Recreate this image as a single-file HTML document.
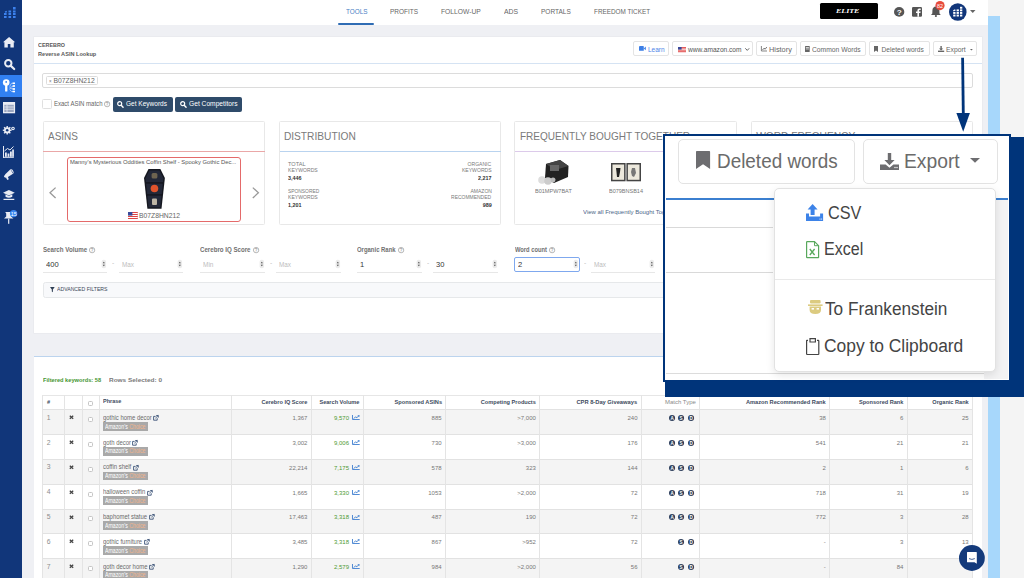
<!DOCTYPE html>
<html><head><meta charset="utf-8"><style>
html,body{margin:0;padding:0;width:1024px;height:578px;overflow:hidden;}
body{font-family:'Liberation Sans', sans-serif;}
#root{position:relative;width:1024px;height:578px;overflow:hidden;}
</style></head><body><div id="root">
<div style="position:absolute;left:0px;top:0px;width:1024.00px;height:578.00px;background:#eff0f4"></div>
<div style="position:absolute;left:22px;top:0px;width:966.00px;height:25.00px;background:#fff"></div>
<div style="position:absolute;left:988px;top:0px;width:36.00px;height:578.00px;background:#f4f4f4"></div>
<div style="position:absolute;left:988.3px;top:16px;width:12.00px;height:562.00px;background:#a7d7fb"></div>
<div style="position:absolute;left:0px;top:0px;width:22.00px;height:578.00px;background:#11367a"></div>
<div style="position:absolute;left:0px;top:74.8px;width:22.00px;height:22.20px;background:#3180f2"></div>
<svg style="position:absolute;left:4px;top:6.5px;width:12.00px;height:10.50px;overflow:visible" viewBox="0 0 12 10.5" preserveAspectRatio="none">
<rect x="0" y="6" width="2.6" height="2" fill="#3d82ee"/><rect x="0" y="9" width="2.6" height="2" fill="#3d82ee"/>
<rect x="4.5" y="3.5" width="2.6" height="2" fill="#3d82ee"/><rect x="4.5" y="6" width="2.6" height="2" fill="#3d82ee"/><rect x="4.5" y="9" width="2.6" height="2" fill="#3d82ee"/>
<rect x="9" y="0" width="2.6" height="2.5" fill="#3d82ee"/><rect x="9" y="3.5" width="2.6" height="2" fill="#3d82ee"/><rect x="9" y="6" width="2.6" height="2" fill="#3d82ee"/><rect x="9" y="9" width="2.6" height="2" fill="#3d82ee"/>
<rect x="1" y="4" width="2" height="1.5" fill="#3d82ee" transform="rotate(-20 2 5)"/>
</svg>
<svg style="position:absolute;left:3px;top:36.8px;width:12.20px;height:10.40px;overflow:visible" viewBox="0 0 12.2 10.4" preserveAspectRatio="none"><path d="M6.1 0 L12.2 5.2 L10.8 5.2 L10.8 10.4 L7.4 10.4 L7.4 7 L4.8 7 L4.8 10.4 L1.4 10.4 L1.4 5.2 L0 5.2 Z" fill="#e9ecf4"/></svg>
<svg style="position:absolute;left:3.5px;top:58.8px;width:11.20px;height:10.40px;overflow:visible" viewBox="0 0 11.2 10.4" preserveAspectRatio="none"><circle cx="4.3" cy="4.3" r="3.2" fill="none" stroke="#e9ecf4" stroke-width="2"/><path d="M6.6 6.6 L10.2 10" stroke="#e9ecf4" stroke-width="2.2" stroke-linecap="round"/></svg>
<svg style="position:absolute;left:0px;top:74.4px;width:22.00px;height:22.60px;overflow:visible" viewBox="0 0 22 22.6" preserveAspectRatio="none"><circle cx="6.2" cy="8.6" r="3.3" fill="#fff"/><circle cx="6.2" cy="7.9" r="0.9" fill="#3382ef"/><rect x="5.1" y="10" width="2.3" height="7.6" rx="0.6" fill="#fff"/><path d="M9.6 12.5 L11.5 9.3 L15 9.3 M9.6 13.5 L15 12 M9.6 14.5 L15 15 M9.6 15.5 L11.5 17.5 L15 17.5" stroke="#cfe0fb" stroke-width="0.7" fill="none"/><rect x="12.6" y="8.5" width="2.4" height="1.6" fill="#fff"/><rect x="12.6" y="11.2" width="2.4" height="1.6" fill="#fff"/><rect x="12.6" y="14.2" width="2.4" height="1.6" fill="#fff"/><rect x="12.6" y="16.7" width="2.4" height="1.6" fill="#fff"/></svg>
<svg style="position:absolute;left:3.1px;top:102px;width:12.10px;height:11.30px;overflow:visible" viewBox="0 0 12.1 11.3" preserveAspectRatio="none"><rect x="0" y="0" width="12.1" height="11.3" fill="#e9ecf4"/><rect x="1.3" y="2.8" width="9.5" height="7.2" fill="#9aa6c0"/><rect x="1.3" y="4.6" width="9.5" height="0.8" fill="#e9ecf4"/><rect x="1.3" y="6.8" width="9.5" height="0.8" fill="#e9ecf4"/><rect x="3.6" y="2.8" width="0.8" height="7.2" fill="#e9ecf4"/></svg>
<svg style="position:absolute;left:3.4px;top:125.5px;width:11.80px;height:8.50px;overflow:visible" viewBox="0 0 11.8 8.8" preserveAspectRatio="none"><circle cx="4.2" cy="4.4" r="3.2" fill="#e9ecf4"/><rect x="3.5" y="0" width="1.4" height="8.8" fill="#e9ecf4" transform="rotate(0 4.2 4.4)"/><rect x="3.5" y="0" width="1.4" height="8.8" fill="#e9ecf4" transform="rotate(45 4.2 4.4)"/><rect x="3.5" y="0" width="1.4" height="8.8" fill="#e9ecf4" transform="rotate(90 4.2 4.4)"/><rect x="3.5" y="0" width="1.4" height="8.8" fill="#e9ecf4" transform="rotate(135 4.2 4.4)"/><circle cx="4.2" cy="4.4" r="1.3" fill="#11367a"/><circle cx="10" cy="2.5" r="1.8" fill="#e9ecf4"/><circle cx="10" cy="2.5" r="0.7" fill="#11367a"/></svg>
<svg style="position:absolute;left:3.4px;top:145.5px;width:10.90px;height:11.80px;overflow:visible" viewBox="0 0 10.9 11.8" preserveAspectRatio="none"><rect x="0" y="0" width="1" height="11.8" fill="#e9ecf4"/><rect x="0" y="10.8" width="10.9" height="1" fill="#e9ecf4"/><rect x="2" y="6.5" width="1.8" height="4.3" fill="#e9ecf4"/><rect x="4.6" y="7.5" width="1.8" height="3.3" fill="#e9ecf4"/><rect x="7" y="5.5" width="1.8" height="5.3" fill="#e9ecf4"/><rect x="9.2" y="3.5" width="1.7" height="7.3" fill="#e9ecf4"/><path d="M1.5 5 L4.5 2.5 L7 4 L10.5 0.5" stroke="#e9ecf4" stroke-width="1" fill="none"/></svg>
<svg style="position:absolute;left:3.8px;top:168.7px;width:9.90px;height:11.10px;overflow:visible" viewBox="0 0 9.9 11.1" preserveAspectRatio="none"><path d="M1 5.5 L6.5 0.3 Q8 -0.2 9 1.5 Q10.2 3.5 9.4 4.6 L3.2 8.6 Z" fill="#e9ecf4"/><path d="M6.8 1.2 Q8.6 2.4 8.8 4.3" stroke="#11367a" stroke-width="0.6" fill="none"/><path d="M1.8 8.2 L3.3 11 L4.8 10.2 L3.8 7.8Z" fill="#e9ecf4"/><circle cx="1.6" cy="7.2" r="1.5" fill="#e9ecf4"/></svg>
<svg style="position:absolute;left:3.4px;top:190.2px;width:11.80px;height:10.50px;overflow:visible" viewBox="0 0 11.8 10.5" preserveAspectRatio="none"><path d="M5.9 0 L11.8 2.8 L5.9 5.6 L0 2.8 Z" fill="#e9ecf4"/><path d="M2.5 4.2 L2.5 6.8 Q5.9 8.5 9.3 6.8 L9.3 4.2 L5.9 6 Z" fill="#e9ecf4"/><rect x="0.5" y="8.8" width="10.8" height="1.2" fill="#e9ecf4"/></svg>
<svg style="position:absolute;left:3.8px;top:210.2px;width:13.30px;height:13.80px;overflow:visible" viewBox="0 0 13.3 13.8" preserveAspectRatio="none"><path d="M1.2 2 L8.2 2 L7.2 3.6 L7.2 6.4 L9.4 8.6 L0 8.6 L2.2 6.4 L2.2 3.6 Z" fill="#e9ecf4"/><rect x="4.1" y="8.6" width="1.2" height="5.2" fill="#e9ecf4"/><circle cx="9.6" cy="3.6" r="3.7" fill="#3a86f0"/><text x="9.7" y="5.6" font-size="5.4" fill="#fff" text-anchor="middle" font-family="Liberation Sans">15</text></svg>
<span style="position:absolute;top:8.11px;font-family:'Liberation Sans', sans-serif;font-size:7.2px;line-height:7.2px;font-weight:400;color:#4d80c4;white-space:nowrap;left:345.60px;transform:scaleX(0.887);transform-origin:left;">TOOLS</span>
<span style="position:absolute;top:8.11px;font-family:'Liberation Sans', sans-serif;font-size:7.2px;line-height:7.2px;font-weight:400;color:#666;white-space:nowrap;left:390.00px;transform:scaleX(0.899);transform-origin:left;">PROFITS</span>
<span style="position:absolute;top:8.11px;font-family:'Liberation Sans', sans-serif;font-size:7.2px;line-height:7.2px;font-weight:400;color:#666;white-space:nowrap;left:441.00px;transform:scaleX(0.934);transform-origin:left;">FOLLOW-UP</span>
<span style="position:absolute;top:8.11px;font-family:'Liberation Sans', sans-serif;font-size:7.2px;line-height:7.2px;font-weight:400;color:#666;white-space:nowrap;left:503.80px;transform:scaleX(0.954);transform-origin:left;">ADS</span>
<span style="position:absolute;top:8.11px;font-family:'Liberation Sans', sans-serif;font-size:7.2px;line-height:7.2px;font-weight:400;color:#666;white-space:nowrap;left:541.00px;transform:scaleX(0.906);transform-origin:left;">PORTALS</span>
<span style="position:absolute;top:8.11px;font-family:'Liberation Sans', sans-serif;font-size:7.2px;line-height:7.2px;font-weight:400;color:#666;white-space:nowrap;left:594.20px;transform:scaleX(0.885);transform-origin:left;">FREEDOM TICKET</span>
<div style="position:absolute;left:338.2px;top:23.4px;width:36.30px;height:2.00px;background:#2f6cb4;border-radius:1px"></div>
<div style="position:absolute;left:819.8px;top:3.3px;width:58.20px;height:16.20px;background:#000;border-radius:1.5px"></div>
<span style="position:absolute;top:8.31px;font-family:'Liberation Serif', serif;font-size:6.6px;line-height:6.6px;font-weight:700;color:#fff;white-space:nowrap;font-style:italic;left:836.40px;transform:scaleX(1.205);transform-origin:left;">ELITE</span>
<svg style="position:absolute;left:894.4px;top:7px;width:10.30px;height:9.80px;overflow:visible" viewBox="0 0 10 10" preserveAspectRatio="none"><circle cx="5" cy="5" r="5" fill="#555"/><text x="5" y="7.8" font-size="8" font-weight="bold" fill="#fff" text-anchor="middle" font-family="Liberation Sans">?</text></svg>
<svg style="position:absolute;left:912px;top:7px;width:10.00px;height:9.80px;overflow:visible" viewBox="0 0 10 10" preserveAspectRatio="none"><rect x="0" y="0" width="10" height="10" rx="1.2" fill="#555"/><path d="M7 10 L7 6.2 L8.4 6.2 L8.6 4.6 L7 4.6 L7 3.7 Q7 3 7.8 3 L8.7 3 L8.7 1.6 Q8 1.5 7.3 1.5 Q5.4 1.5 5.4 3.4 L5.4 4.6 L4 4.6 L4 6.2 L5.4 6.2 L5.4 10 Z" fill="#fff"/></svg>
<svg style="position:absolute;left:930.7px;top:6px;width:9.80px;height:11.00px;overflow:visible" viewBox="0 0 9.8 11" preserveAspectRatio="none"><path d="M4.9 0.5 Q8.3 0.8 8.4 4.5 L8.5 7.5 L9.8 9 L0 9 L1.3 7.5 L1.4 4.5 Q1.5 0.8 4.9 0.5Z" fill="#555"/><circle cx="4.9" cy="10" r="1.1" fill="#555"/></svg>
<svg style="position:absolute;left:935px;top:0.8px;width:10.00px;height:9.20px;overflow:visible" viewBox="0 0 10 9.2" preserveAspectRatio="none"><circle cx="5" cy="4.6" r="4.6" fill="#e74c3c"/><text x="5" y="6.6" font-size="5.4" fill="#fff" text-anchor="middle" font-family="Liberation Sans">82</text></svg>
<svg style="position:absolute;left:949px;top:2.7px;width:17.60px;height:18.00px;overflow:visible" viewBox="0 0 17.6 18" preserveAspectRatio="none"><circle cx="8.8" cy="9" r="8.8" fill="#11367a"/><rect x="4.2" y="11.6" width="2.3" height="1.9" fill="#fff"/><rect x="7.6" y="11.6" width="2.3" height="1.9" fill="#fff"/><rect x="11" y="11.6" width="2.3" height="1.9" fill="#fff"/><rect x="4.2" y="9" width="2.3" height="1.9" fill="#fff"/><rect x="7.6" y="9" width="2.3" height="1.9" fill="#fff"/><rect x="11" y="9" width="2.3" height="1.9" fill="#fff"/><rect x="7.6" y="6.4" width="2.3" height="1.9" fill="#fff"/><rect x="11" y="6.4" width="2.3" height="1.9" fill="#fff"/><rect x="11" y="3.8" width="2.3" height="1.9" fill="#fff"/><rect x="4.2" y="6.6" width="2.3" height="1.6" fill="#fff" transform="rotate(-25 5.3 7.4)"/></svg>
<svg style="position:absolute;left:969.5px;top:10px;width:5.50px;height:3.00px;overflow:visible" viewBox="0 0 5.5 3" preserveAspectRatio="none"><path d="M0 0 L5.5 0 L2.75 3 Z" fill="#666"/></svg>
<div style="position:absolute;left:33.8px;top:37px;width:947.80px;height:295.80px;background:#fff;box-shadow:0 0 0 0.6px #e6e8ec"></div>
<div style="position:absolute;left:33.8px;top:63.2px;width:947.80px;height:1.00px;background:#d5e3f3"></div>
<span style="position:absolute;top:42.56px;font-family:'Liberation Sans', sans-serif;font-size:5.6px;line-height:5.6px;font-weight:700;color:#5a5a5a;white-space:nowrap;left:38.40px;transform:scaleX(0.965);transform-origin:left;">CEREBRO</span>
<span style="position:absolute;top:51.12px;font-family:'Liberation Sans', sans-serif;font-size:6.0px;line-height:6.0px;font-weight:700;color:#5a5a5a;white-space:nowrap;left:38.40px;transform:scaleX(0.932);transform-origin:left;">Reverse ASIN Lookup</span>
<div style="position:absolute;left:633.3px;top:41.3px;width:36.10px;height:15.10px;background:#fff;border:0.8px solid #e4e4e4;border-radius:2px;box-sizing:border-box"></div>
<div style="position:absolute;left:672.3px;top:41.3px;width:80.50px;height:15.10px;background:#fff;border:0.8px solid #e4e4e4;border-radius:2px;box-sizing:border-box"></div>
<div style="position:absolute;left:756px;top:41.3px;width:41.30px;height:15.10px;background:#fff;border:0.8px solid #e4e4e4;border-radius:2px;box-sizing:border-box"></div>
<div style="position:absolute;left:800.4px;top:41.3px;width:65.40px;height:15.10px;background:#fff;border:0.8px solid #e4e4e4;border-radius:2px;box-sizing:border-box"></div>
<div style="position:absolute;left:869px;top:41.3px;width:60.60px;height:15.10px;background:#fff;border:0.8px solid #e4e4e4;border-radius:2px;box-sizing:border-box"></div>
<div style="position:absolute;left:932.6px;top:41.3px;width:44.90px;height:15.10px;background:#fff;border:0.8px solid #e4e4e4;border-radius:2px;box-sizing:border-box"></div>
<svg style="position:absolute;left:638.8px;top:46.2px;width:6.80px;height:4.80px;overflow:visible" viewBox="0 0 6.8 4.8" preserveAspectRatio="none"><rect x="0" y="0" width="4.8" height="4.8" rx="0.5" fill="#3d7fe6"/><path d="M4.8 2.4 L6.8 0.6 L6.8 4.2 Z" fill="#3d7fe6"/></svg>
<span style="position:absolute;top:46.51px;font-family:'Liberation Sans', sans-serif;font-size:6.6px;line-height:6.6px;font-weight:400;color:#4d86e8;white-space:nowrap;left:647.80px;transform:scaleX(0.984);transform-origin:left;">Learn</span>
<svg style="position:absolute;left:677.8px;top:47.3px;width:8.00px;height:5.20px;overflow:visible" viewBox="0 0 8 5.2" preserveAspectRatio="none"><rect width="8" height="5.2" fill="#d33"/><rect y="0.8" width="8" height="0.7" fill="#fff"/><rect y="2.2" width="8" height="0.7" fill="#fff"/><rect y="3.6" width="8" height="0.7" fill="#fff"/><rect width="3.6" height="2.6" fill="#3a4a9a"/></svg>
<span style="position:absolute;top:46.51px;font-family:'Liberation Sans', sans-serif;font-size:6.6px;line-height:6.6px;font-weight:400;color:#555;white-space:nowrap;left:688.00px;">www.amazon.com</span>
<svg style="position:absolute;left:745px;top:48.3px;width:4.50px;height:2.70px;overflow:visible" viewBox="0 0 4.5 2.7" preserveAspectRatio="none"><path d="M0.3 0.3 L2.25 2.4 L4.2 0.3" stroke="#555" stroke-width="0.9" fill="none"/></svg>
<svg style="position:absolute;left:761px;top:46.2px;width:6.00px;height:5.30px;overflow:visible" viewBox="0 0 6 5.3" preserveAspectRatio="none"><path d="M0.4 0 L0.4 5 L6 5" stroke="#666" stroke-width="0.8" fill="none"/><path d="M1.5 4 L3 2.2 L4.2 3.2 L5.8 1" stroke="#666" stroke-width="0.9" fill="none"/></svg>
<span style="position:absolute;top:46.51px;font-family:'Liberation Sans', sans-serif;font-size:6.6px;line-height:6.6px;font-weight:400;color:#666;white-space:nowrap;left:768.80px;transform:scaleX(1.111);transform-origin:left;">History</span>
<svg style="position:absolute;left:805.3px;top:46px;width:4.70px;height:6.00px;overflow:visible" viewBox="0 0 4.7 6" preserveAspectRatio="none"><rect width="4.7" height="6" rx="0.5" fill="#666"/><rect x="0.8" y="1.2" width="3.1" height="0.7" fill="#fff"/><rect x="0.8" y="2.6" width="3.1" height="0.7" fill="#fff"/></svg>
<span style="position:absolute;top:46.51px;font-family:'Liberation Sans', sans-serif;font-size:6.6px;line-height:6.6px;font-weight:400;color:#666;white-space:nowrap;left:812.20px;transform:scaleX(1.021);transform-origin:left;">Common Words</span>
<svg style="position:absolute;left:874.3px;top:46px;width:4.00px;height:6.00px;overflow:visible" viewBox="0 0 4 6" preserveAspectRatio="none"><path d="M0 0 L4 0 L4 6 L2 4.5 L0 6 Z" fill="#666"/></svg>
<span style="position:absolute;top:46.51px;font-family:'Liberation Sans', sans-serif;font-size:6.6px;line-height:6.6px;font-weight:400;color:#666;white-space:nowrap;left:881.60px;">Deleted words</span>
<svg style="position:absolute;left:937.6px;top:46px;width:6.20px;height:6.00px;overflow:visible" viewBox="0 0 6.2 6" preserveAspectRatio="none"><path d="M2.4 0 L3.8 0 L3.8 2.6 L5.2 2.6 L3.1 4.6 L1 2.6 L2.4 2.6 Z" fill="#666"/><rect x="0" y="4.6" width="6.2" height="1.4" fill="#666"/></svg>
<span style="position:absolute;top:46.51px;font-family:'Liberation Sans', sans-serif;font-size:6.6px;line-height:6.6px;font-weight:400;color:#666;white-space:nowrap;left:945.80px;transform:scaleX(1.028);transform-origin:left;">Export</span>
<svg style="position:absolute;left:969.8px;top:48.6px;width:2.80px;height:1.60px;overflow:visible" viewBox="0 0 2.8 1.6" preserveAspectRatio="none"><path d="M0 0 L2.8 0 L1.4 1.6 Z" fill="#666"/></svg>
<div style="position:absolute;left:42.3px;top:72.8px;width:930.40px;height:15.20px;background:#fff;border:0.8px solid #dcdcdc;border-radius:2px;box-sizing:border-box"></div>
<div style="position:absolute;left:45.7px;top:76px;width:52.40px;height:9.30px;background:#fff;border:0.8px solid #dcdcdc;border-radius:1.5px;box-sizing:border-box"></div>
<span style="position:absolute;top:78.97px;font-family:'Liberation Sans', sans-serif;font-size:5.0px;line-height:5.0px;font-weight:400;color:#777;white-space:nowrap;left:48.80px;transform:scaleX(0.890);transform-origin:left;">&#215;</span>
<span style="position:absolute;top:77.84px;font-family:'Liberation Sans', sans-serif;font-size:6.8px;line-height:6.8px;font-weight:400;color:#666;white-space:nowrap;left:53.50px;">B07Z8HN212</span>
<div style="position:absolute;left:42.3px;top:99.3px;width:9.90px;height:10.10px;background:#fff;border:0.8px solid #e0e0e0;border-radius:1.5px;box-sizing:border-box"></div>
<span style="position:absolute;top:101.14px;font-family:'Liberation Sans', sans-serif;font-size:6.8px;line-height:6.8px;font-weight:400;color:#666;white-space:nowrap;left:54.00px;transform:scaleX(0.885);transform-origin:left;">Exact ASIN match</span>
<svg style="position:absolute;left:103.5px;top:101.3px;width:6.20px;height:6.20px;overflow:visible" viewBox="0 0 6.2 6.2" preserveAspectRatio="none"><circle cx="3.1" cy="3.1" r="2.7" fill="none" stroke="#888" stroke-width="0.6"/><text x="3.1" y="5" font-size="4.6" fill="#888" text-anchor="middle" font-family="Liberation Sans">?</text></svg>
<div style="position:absolute;left:112.5px;top:97px;width:60.20px;height:15.00px;background:#2f4b6a;border-radius:2px"></div>
<div style="position:absolute;left:175px;top:97px;width:66.90px;height:15.00px;background:#2f4b6a;border-radius:2px"></div>
<svg style="position:absolute;left:117.4px;top:100.6px;width:6.60px;height:6.80px;overflow:visible" viewBox="0 0 6.6 6.8" preserveAspectRatio="none"><circle cx="2.7" cy="2.7" r="2.0" fill="none" stroke="#fff" stroke-width="1.2"/><path d="M4.2 4.2 L6.1 6.3" stroke="#fff" stroke-width="1.4" stroke-linecap="round"/></svg>
<span style="position:absolute;top:101.44px;font-family:'Liberation Sans', sans-serif;font-size:6.8px;line-height:6.8px;font-weight:400;color:#fff;white-space:nowrap;left:126.00px;transform:scaleX(0.960);transform-origin:left;">Get Keywords</span>
<svg style="position:absolute;left:180.1px;top:100.6px;width:6.60px;height:6.80px;overflow:visible" viewBox="0 0 6.6 6.8" preserveAspectRatio="none"><circle cx="2.7" cy="2.7" r="2.0" fill="none" stroke="#fff" stroke-width="1.2"/><path d="M4.2 4.2 L6.1 6.3" stroke="#fff" stroke-width="1.4" stroke-linecap="round"/></svg>
<span style="position:absolute;top:101.44px;font-family:'Liberation Sans', sans-serif;font-size:6.8px;line-height:6.8px;font-weight:400;color:#fff;white-space:nowrap;left:189.00px;transform:scaleX(0.980);transform-origin:left;">Get Competitors</span>
<div style="position:absolute;left:42.5px;top:121.3px;width:222.90px;height:104.20px;background:#fff;border:0.8px solid #e8e8e8;border-radius:1.5px;box-sizing:border-box"></div>
<div style="position:absolute;left:43.3px;top:151.3px;width:221.30px;height:1.00px;background:#eaa7a7"></div>
<span style="position:absolute;top:131.57px;font-family:'Liberation Sans', sans-serif;font-size:10.2px;line-height:10.2px;font-weight:400;color:#7a7a7a;white-space:nowrap;left:47.70px;transform:scaleX(0.981);transform-origin:left;">ASINS</span>
<div style="position:absolute;left:278.7px;top:121.3px;width:222.80px;height:104.20px;background:#fff;border:0.8px solid #e8e8e8;border-radius:1.5px;box-sizing:border-box"></div>
<div style="position:absolute;left:279.5px;top:151.3px;width:221.20px;height:1.00px;background:#b9d3ef"></div>
<span style="position:absolute;top:131.57px;font-family:'Liberation Sans', sans-serif;font-size:10.2px;line-height:10.2px;font-weight:400;color:#7a7a7a;white-space:nowrap;left:283.90px;">DISTRIBUTION</span>
<div style="position:absolute;left:514.4px;top:121.3px;width:222.60px;height:104.20px;background:#fff;border:0.8px solid #e8e8e8;border-radius:1.5px;box-sizing:border-box"></div>
<div style="position:absolute;left:515.1999999999999px;top:151.3px;width:221.00px;height:1.00px;background:#dccaea"></div>
<span style="position:absolute;top:131.57px;font-family:'Liberation Sans', sans-serif;font-size:10.2px;line-height:10.2px;font-weight:400;color:#7a7a7a;white-space:nowrap;left:519.60px;transform:scaleX(0.984);transform-origin:left;">FREQUENTLY BOUGHT TOGETHER</span>
<div style="position:absolute;left:751px;top:121.3px;width:221.70px;height:104.20px;background:#fff;border:0.8px solid #e8e8e8;border-radius:1.5px;box-sizing:border-box"></div>
<div style="position:absolute;left:751.8px;top:151.3px;width:220.10px;height:1.00px;background:#b9d3ef"></div>
<span style="position:absolute;top:131.57px;font-family:'Liberation Sans', sans-serif;font-size:10.2px;line-height:10.2px;font-weight:400;color:#7a7a7a;white-space:nowrap;left:756.20px;">WORD FREQUENCY</span>
<div style="position:absolute;left:67.1px;top:156.5px;width:173.70px;height:65.80px;border:1px solid #e46a6a;border-radius:3px;box-sizing:border-box"></div>
<span style="position:absolute;top:160.26px;font-family:'Liberation Sans', sans-serif;font-size:5.6px;line-height:5.6px;font-weight:400;color:#555;white-space:nowrap;left:69.70px;transform:scaleX(1.044);transform-origin:left;">Manny's Mysterious Oddities Coffin Shelf - Spooky Gothic Dec...</span>
<svg style="position:absolute;left:48.6px;top:186.5px;width:7.40px;height:11.70px;overflow:visible" viewBox="0 0 7.4 11.7" preserveAspectRatio="none"><path d="M6.6 0.6 L1 5.85 L6.6 11.1" stroke="#999" stroke-width="1.3" fill="none"/></svg>
<svg style="position:absolute;left:251.8px;top:186.5px;width:7.70px;height:11.70px;overflow:visible" viewBox="0 0 7.7 11.7" preserveAspectRatio="none"><path d="M0.8 0.6 L6.4 5.85 L0.8 11.1" stroke="#999" stroke-width="1.3" fill="none"/></svg>
<svg style="position:absolute;left:143.5px;top:169px;width:20.90px;height:39.70px;overflow:visible" viewBox="0 0 20.9 39.7" preserveAspectRatio="none"><path d="M4.5 0 L16.4 0 L20.9 9 L17.5 39.7 L3.4 39.7 L0 9 Z" fill="#15171f"/><path d="M5.4 1.4 L15.5 1.4 L19.4 9.2 L16.3 38.3 L4.6 38.3 L1.5 9.2 Z" fill="#232838"/><rect x="7.6" y="4" width="5.8" height="5.6" rx="1.5" fill="#6e6450"/><circle cx="10.45" cy="19.5" r="3.8" fill="#e0532c"/><rect x="8" y="29.5" width="5" height="6.5" rx="1" fill="#bdb5a5"/><rect x="2" y="13.5" width="17" height="0.9" fill="#0c0c10"/><rect x="3" y="25.5" width="15" height="0.9" fill="#0c0c10"/></svg>
<svg style="position:absolute;left:127.6px;top:211.8px;width:9.80px;height:7.00px;overflow:visible" viewBox="0 0 9.8 7" preserveAspectRatio="none"><rect width="9.8" height="7" fill="#d44"/><rect y="1" width="9.8" height="1" fill="#fff"/><rect y="3" width="9.8" height="1" fill="#fff"/><rect y="5" width="9.8" height="1" fill="#fff"/><rect width="4.4" height="3.6" fill="#3a4a9a"/></svg>
<span style="position:absolute;top:211.71px;font-family:'Liberation Sans', sans-serif;font-size:7.2px;line-height:7.2px;font-weight:400;color:#666;white-space:nowrap;left:138.60px;transform:scaleX(0.941);transform-origin:left;">B07Z8HN212</span>
<span style="position:absolute;top:161.66px;font-family:'Liberation Sans', sans-serif;font-size:5.6px;line-height:5.6px;font-weight:400;color:#7a7a7a;white-space:nowrap;left:288.00px;">TOTAL</span>
<span style="position:absolute;top:167.56px;font-family:'Liberation Sans', sans-serif;font-size:5.6px;line-height:5.6px;font-weight:400;color:#7a7a7a;white-space:nowrap;left:288.00px;transform:scaleX(0.910);transform-origin:left;">KEYWORDS</span>
<span style="position:absolute;top:175.69px;font-family:'Liberation Sans', sans-serif;font-size:5.8px;line-height:5.8px;font-weight:700;color:#333;white-space:nowrap;left:288.00px;transform:scaleX(0.930);transform-origin:left;">3,446</span>
<span style="position:absolute;top:189.16px;font-family:'Liberation Sans', sans-serif;font-size:5.6px;line-height:5.6px;font-weight:400;color:#7a7a7a;white-space:nowrap;left:288.00px;transform:scaleX(0.874);transform-origin:left;">SPONSORED</span>
<span style="position:absolute;top:195.06px;font-family:'Liberation Sans', sans-serif;font-size:5.6px;line-height:5.6px;font-weight:400;color:#7a7a7a;white-space:nowrap;left:288.00px;transform:scaleX(0.910);transform-origin:left;">KEYWORDS</span>
<span style="position:absolute;top:203.19px;font-family:'Liberation Sans', sans-serif;font-size:5.8px;line-height:5.8px;font-weight:700;color:#333;white-space:nowrap;left:288.00px;transform:scaleX(0.930);transform-origin:left;">1,201</span>
<span style="position:absolute;top:161.66px;font-family:'Liberation Sans', sans-serif;font-size:5.6px;line-height:5.6px;font-weight:400;color:#7a7a7a;white-space:nowrap;right:532.50px;transform:scaleX(0.900);transform-origin:right;">ORGANIC</span>
<span style="position:absolute;top:167.56px;font-family:'Liberation Sans', sans-serif;font-size:5.6px;line-height:5.6px;font-weight:400;color:#7a7a7a;white-space:nowrap;right:532.50px;transform:scaleX(0.910);transform-origin:right;">KEYWORDS</span>
<span style="position:absolute;top:175.69px;font-family:'Liberation Sans', sans-serif;font-size:5.8px;line-height:5.8px;font-weight:700;color:#333;white-space:nowrap;right:532.50px;transform:scaleX(0.930);transform-origin:right;">2,217</span>
<span style="position:absolute;top:189.16px;font-family:'Liberation Sans', sans-serif;font-size:5.6px;line-height:5.6px;font-weight:400;color:#7a7a7a;white-space:nowrap;right:532.50px;transform:scaleX(0.898);transform-origin:right;">AMAZON</span>
<span style="position:absolute;top:195.06px;font-family:'Liberation Sans', sans-serif;font-size:5.6px;line-height:5.6px;font-weight:400;color:#7a7a7a;white-space:nowrap;right:532.50px;transform:scaleX(0.888);transform-origin:right;">RECOMMENDED</span>
<span style="position:absolute;top:203.19px;font-family:'Liberation Sans', sans-serif;font-size:5.8px;line-height:5.8px;font-weight:700;color:#333;white-space:nowrap;right:532.50px;transform:scaleX(0.931);transform-origin:right;">989</span>
<svg style="position:absolute;left:537.8px;top:158.4px;width:30.50px;height:26.90px;overflow:visible" viewBox="0 0 30.5 26.9" preserveAspectRatio="none"><path d="M8 6 L22 2 L30.5 8 L30 19 L16 25 L7 20 Z" fill="#222"/><path d="M8 6 L22 2 L30.5 8 L17 12 Z" fill="#444"/><rect x="12" y="7" width="9" height="6" fill="#666"/><circle cx="4" cy="22" r="3.8" fill="#ddd"/><circle cx="10" cy="23" r="3.8" fill="#ccc"/><circle cx="15" cy="22" r="2.5" fill="#bbb"/></svg>
<span style="position:absolute;top:189.39px;font-family:'Liberation Sans', sans-serif;font-size:5.8px;line-height:5.8px;font-weight:400;color:#777;white-space:nowrap;left:535.00px;transform:scaleX(0.954);transform-origin:left;">B01MPW7BAT</span>
<svg style="position:absolute;left:611px;top:163px;width:30.00px;height:18.30px;overflow:visible" viewBox="0 0 30 18.3" preserveAspectRatio="none"><rect x="0" y="0" width="14.6" height="18.3" fill="#444"/><rect x="15.4" y="0" width="14.6" height="18.3" fill="#444"/><rect x="1.5" y="1.5" width="11.6" height="15.3" fill="#ece8dc"/><rect x="16.9" y="1.5" width="11.6" height="15.3" fill="#ece8dc"/><path d="M5 5 L9.5 5 L9 9 L8 14 L6 14 L5.5 9Z" fill="#222"/><path d="M21 5 L24 5 L25 10 L23 14 L21 13 L20 9Z" fill="#777"/></svg>
<span style="position:absolute;top:189.39px;font-family:'Liberation Sans', sans-serif;font-size:5.8px;line-height:5.8px;font-weight:400;color:#777;white-space:nowrap;left:608.80px;transform:scaleX(0.950);transform-origin:left;">B079BNSB14</span>
<span style="position:absolute;top:210.26px;font-family:'Liberation Sans', sans-serif;font-size:5.6px;line-height:5.6px;font-weight:400;color:#4c6687;white-space:nowrap;left:583.00px;transform:scaleX(1.071);transform-origin:left;">View all Frequently Bought Together</span>
<span style="position:absolute;top:246.37px;font-family:'Liberation Sans', sans-serif;font-size:7.0px;line-height:7.0px;font-weight:700;color:#707070;white-space:nowrap;left:42.50px;transform:scaleX(0.881);transform-origin:left;">Search Volume</span>
<svg style="position:absolute;left:88.8px;top:246.6px;width:6.20px;height:6.20px;overflow:visible" viewBox="0 0 6.2 6.2" preserveAspectRatio="none"><circle cx="3.1" cy="3.1" r="2.7" fill="none" stroke="#888" stroke-width="0.6"/><text x="3.1" y="5" font-size="4.6" fill="#888" text-anchor="middle" font-family="Liberation Sans">?</text></svg>
<div style="position:absolute;left:42.5px;top:271.8px;width:64.70px;height:0.80px;background:#e7e7e7"></div>
<span style="position:absolute;top:260.61px;font-family:'Liberation Sans', sans-serif;font-size:7.2px;line-height:7.2px;font-weight:400;color:#333;white-space:nowrap;left:45.50px;transform:scaleX(1.050);transform-origin:left;">400</span>
<svg style="position:absolute;left:101.8px;top:260.4px;width:3.70px;height:8.00px;overflow:visible" viewBox="0 0 3.7 8" preserveAspectRatio="none"><rect x="-0.4" y="-0.3" width="4.5" height="8.6" rx="2" fill="#ebebeb"/><path d="M0.8 3.2 L1.85 1.7 L2.9 3.2Z M0.8 4.8 L1.85 6.3 L2.9 4.8Z" fill="#444"/></svg>
<div style="position:absolute;left:118.5px;top:271.8px;width:64.70px;height:0.80px;background:#e7e7e7"></div>
<span style="position:absolute;top:260.61px;font-family:'Liberation Sans', sans-serif;font-size:7.2px;line-height:7.2px;font-weight:400;color:#bdbdbd;white-space:nowrap;left:121.50px;transform:scaleX(0.883);transform-origin:left;">Max</span>
<svg style="position:absolute;left:177.8px;top:260.4px;width:3.70px;height:8.00px;overflow:visible" viewBox="0 0 3.7 8" preserveAspectRatio="none"><rect x="-0.4" y="-0.3" width="4.5" height="8.6" rx="2" fill="#ebebeb"/><path d="M0.8 3.2 L1.85 1.7 L2.9 3.2Z M0.8 4.8 L1.85 6.3 L2.9 4.8Z" fill="#444"/></svg>
<span style="position:absolute;top:260.12px;font-family:'Liberation Sans', sans-serif;font-size:6px;line-height:6px;font-weight:400;color:#aaa;white-space:nowrap;left:112.20px;transform:scaleX(1.100);transform-origin:left;">-</span>
<span style="position:absolute;top:246.37px;font-family:'Liberation Sans', sans-serif;font-size:7.0px;line-height:7.0px;font-weight:700;color:#707070;white-space:nowrap;left:200.20px;transform:scaleX(0.877);transform-origin:left;">Cerebro IQ Score</span>
<svg style="position:absolute;left:252.89999999999998px;top:246.6px;width:6.20px;height:6.20px;overflow:visible" viewBox="0 0 6.2 6.2" preserveAspectRatio="none"><circle cx="3.1" cy="3.1" r="2.7" fill="none" stroke="#888" stroke-width="0.6"/><text x="3.1" y="5" font-size="4.6" fill="#888" text-anchor="middle" font-family="Liberation Sans">?</text></svg>
<div style="position:absolute;left:200.2px;top:271.8px;width:64.70px;height:0.80px;background:#e7e7e7"></div>
<span style="position:absolute;top:260.61px;font-family:'Liberation Sans', sans-serif;font-size:7.2px;line-height:7.2px;font-weight:400;color:#bdbdbd;white-space:nowrap;left:203.20px;transform:scaleX(0.906);transform-origin:left;">Min</span>
<svg style="position:absolute;left:259.5px;top:260.4px;width:3.70px;height:8.00px;overflow:visible" viewBox="0 0 3.7 8" preserveAspectRatio="none"><rect x="-0.4" y="-0.3" width="4.5" height="8.6" rx="2" fill="#ebebeb"/><path d="M0.8 3.2 L1.85 1.7 L2.9 3.2Z M0.8 4.8 L1.85 6.3 L2.9 4.8Z" fill="#444"/></svg>
<div style="position:absolute;left:276.2px;top:271.8px;width:64.70px;height:0.80px;background:#e7e7e7"></div>
<span style="position:absolute;top:260.61px;font-family:'Liberation Sans', sans-serif;font-size:7.2px;line-height:7.2px;font-weight:400;color:#bdbdbd;white-space:nowrap;left:279.20px;transform:scaleX(0.883);transform-origin:left;">Max</span>
<svg style="position:absolute;left:335.5px;top:260.4px;width:3.70px;height:8.00px;overflow:visible" viewBox="0 0 3.7 8" preserveAspectRatio="none"><rect x="-0.4" y="-0.3" width="4.5" height="8.6" rx="2" fill="#ebebeb"/><path d="M0.8 3.2 L1.85 1.7 L2.9 3.2Z M0.8 4.8 L1.85 6.3 L2.9 4.8Z" fill="#444"/></svg>
<span style="position:absolute;top:260.12px;font-family:'Liberation Sans', sans-serif;font-size:6px;line-height:6px;font-weight:400;color:#aaa;white-space:nowrap;left:269.90px;transform:scaleX(1.100);transform-origin:left;">-</span>
<span style="position:absolute;top:246.37px;font-family:'Liberation Sans', sans-serif;font-size:7.0px;line-height:7.0px;font-weight:700;color:#707070;white-space:nowrap;left:357.20px;transform:scaleX(0.848);transform-origin:left;">Organic Rank</span>
<svg style="position:absolute;left:398.0px;top:246.6px;width:6.20px;height:6.20px;overflow:visible" viewBox="0 0 6.2 6.2" preserveAspectRatio="none"><circle cx="3.1" cy="3.1" r="2.7" fill="none" stroke="#888" stroke-width="0.6"/><text x="3.1" y="5" font-size="4.6" fill="#888" text-anchor="middle" font-family="Liberation Sans">?</text></svg>
<div style="position:absolute;left:357.2px;top:271.8px;width:64.70px;height:0.80px;background:#e7e7e7"></div>
<span style="position:absolute;top:260.61px;font-family:'Liberation Sans', sans-serif;font-size:7.2px;line-height:7.2px;font-weight:400;color:#333;white-space:nowrap;left:360.20px;transform:scaleX(1.050);transform-origin:left;">1</span>
<svg style="position:absolute;left:416.5px;top:260.4px;width:3.70px;height:8.00px;overflow:visible" viewBox="0 0 3.7 8" preserveAspectRatio="none"><rect x="-0.4" y="-0.3" width="4.5" height="8.6" rx="2" fill="#ebebeb"/><path d="M0.8 3.2 L1.85 1.7 L2.9 3.2Z M0.8 4.8 L1.85 6.3 L2.9 4.8Z" fill="#444"/></svg>
<div style="position:absolute;left:433.2px;top:271.8px;width:64.70px;height:0.80px;background:#e7e7e7"></div>
<span style="position:absolute;top:260.61px;font-family:'Liberation Sans', sans-serif;font-size:7.2px;line-height:7.2px;font-weight:400;color:#333;white-space:nowrap;left:436.20px;transform:scaleX(1.050);transform-origin:left;">30</span>
<svg style="position:absolute;left:492.5px;top:260.4px;width:3.70px;height:8.00px;overflow:visible" viewBox="0 0 3.7 8" preserveAspectRatio="none"><rect x="-0.4" y="-0.3" width="4.5" height="8.6" rx="2" fill="#ebebeb"/><path d="M0.8 3.2 L1.85 1.7 L2.9 3.2Z M0.8 4.8 L1.85 6.3 L2.9 4.8Z" fill="#444"/></svg>
<span style="position:absolute;top:260.12px;font-family:'Liberation Sans', sans-serif;font-size:6px;line-height:6px;font-weight:400;color:#aaa;white-space:nowrap;left:426.90px;transform:scaleX(1.100);transform-origin:left;">-</span>
<span style="position:absolute;top:246.37px;font-family:'Liberation Sans', sans-serif;font-size:7.0px;line-height:7.0px;font-weight:700;color:#707070;white-space:nowrap;left:514.60px;transform:scaleX(0.825);transform-origin:left;">Word count</span>
<svg style="position:absolute;left:548.8000000000001px;top:246.6px;width:6.20px;height:6.20px;overflow:visible" viewBox="0 0 6.2 6.2" preserveAspectRatio="none"><circle cx="3.1" cy="3.1" r="2.7" fill="none" stroke="#888" stroke-width="0.6"/><text x="3.1" y="5" font-size="4.6" fill="#888" text-anchor="middle" font-family="Liberation Sans">?</text></svg>
<div style="position:absolute;left:514.2px;top:256.6px;width:65.70px;height:15.80px;border:1px solid #7fa8ee;border-radius:2px;box-sizing:border-box;background:#fff"></div>
<span style="position:absolute;top:260.61px;font-family:'Liberation Sans', sans-serif;font-size:7.2px;line-height:7.2px;font-weight:400;color:#333;white-space:nowrap;left:517.60px;transform:scaleX(1.050);transform-origin:left;">2</span>
<svg style="position:absolute;left:573.9px;top:260.4px;width:3.70px;height:8.00px;overflow:visible" viewBox="0 0 3.7 8" preserveAspectRatio="none"><rect x="-0.4" y="-0.3" width="4.5" height="8.6" rx="2" fill="#ebebeb"/><path d="M0.8 3.2 L1.85 1.7 L2.9 3.2Z M0.8 4.8 L1.85 6.3 L2.9 4.8Z" fill="#444"/></svg>
<div style="position:absolute;left:590.6px;top:271.8px;width:64.70px;height:0.80px;background:#e7e7e7"></div>
<span style="position:absolute;top:260.61px;font-family:'Liberation Sans', sans-serif;font-size:7.2px;line-height:7.2px;font-weight:400;color:#bdbdbd;white-space:nowrap;left:593.60px;transform:scaleX(0.883);transform-origin:left;">Max</span>
<svg style="position:absolute;left:649.9px;top:260.4px;width:3.70px;height:8.00px;overflow:visible" viewBox="0 0 3.7 8" preserveAspectRatio="none"><rect x="-0.4" y="-0.3" width="4.5" height="8.6" rx="2" fill="#ebebeb"/><path d="M0.8 3.2 L1.85 1.7 L2.9 3.2Z M0.8 4.8 L1.85 6.3 L2.9 4.8Z" fill="#444"/></svg>
<span style="position:absolute;top:260.12px;font-family:'Liberation Sans', sans-serif;font-size:6px;line-height:6px;font-weight:400;color:#aaa;white-space:nowrap;left:584.30px;transform:scaleX(1.100);transform-origin:left;">-</span>
<div style="position:absolute;left:42.5px;top:281.9px;width:930.20px;height:15.90px;background:#f8f9fb;border:0.8px solid #e6e8ea;border-radius:2.5px;box-sizing:border-box"></div>
<svg style="position:absolute;left:49.8px;top:287.3px;width:4.70px;height:5.30px;overflow:visible" viewBox="0 0 4.7 5.3" preserveAspectRatio="none"><path d="M0 0 L4.7 0 L2.9 2.4 L2.9 5.3 L1.8 4.6 L1.8 2.4 Z" fill="#2f3f55"/></svg>
<span style="position:absolute;top:287.39px;font-family:'Liberation Sans', sans-serif;font-size:5.8px;line-height:5.8px;font-weight:400;color:#3a4657;white-space:nowrap;left:57.20px;transform:scaleX(0.889);transform-origin:left;">ADVANCED FILTERS</span>
<div style="position:absolute;left:33.8px;top:355.6px;width:947.80px;height:222.40px;background:#fff"></div>
<div style="position:absolute;left:33.8px;top:355.6px;width:947.80px;height:1.00px;background:#bcd4ee"></div>
<span style="position:absolute;top:377.35px;font-family:'Liberation Sans', sans-serif;font-size:6.2px;line-height:6.2px;font-weight:700;color:#469530;white-space:nowrap;left:42.50px;transform:scaleX(0.918);transform-origin:left;">Filtered keywords: 58</span>
<span style="position:absolute;top:377.35px;font-family:'Liberation Sans', sans-serif;font-size:6.2px;line-height:6.2px;font-weight:700;color:#7a7a7a;white-space:nowrap;left:109.00px;transform:scaleX(1.041);transform-origin:left;">Rows Selected: 0</span>
<div style="position:absolute;left:42.5px;top:409.7px;width:930.20px;height:24.80px;background:#f4f4f4"></div>
<div style="position:absolute;left:42.5px;top:459.3px;width:930.20px;height:24.80px;background:#f4f4f4"></div>
<div style="position:absolute;left:42.5px;top:508.9px;width:930.20px;height:24.80px;background:#f4f4f4"></div>
<div style="position:absolute;left:42.5px;top:558.5px;width:930.20px;height:24.80px;background:#f4f4f4"></div>
<div style="position:absolute;left:42.5px;top:394.7px;width:930.20px;height:0.80px;background:#e6e6e6"></div>
<div style="position:absolute;left:42.5px;top:409.3px;width:930.20px;height:0.80px;background:#e2e2e2"></div>
<div style="position:absolute;left:42.5px;top:434.1px;width:930.20px;height:0.80px;background:#e2e2e2"></div>
<div style="position:absolute;left:42.5px;top:458.90000000000003px;width:930.20px;height:0.80px;background:#e2e2e2"></div>
<div style="position:absolute;left:42.5px;top:483.70000000000005px;width:930.20px;height:0.80px;background:#e2e2e2"></div>
<div style="position:absolute;left:42.5px;top:508.5px;width:930.20px;height:0.80px;background:#e2e2e2"></div>
<div style="position:absolute;left:42.5px;top:533.3000000000001px;width:930.20px;height:0.80px;background:#e2e2e2"></div>
<div style="position:absolute;left:42.5px;top:558.1px;width:930.20px;height:0.80px;background:#e2e2e2"></div>
<div style="position:absolute;left:42.5px;top:582.9px;width:930.20px;height:0.80px;background:#e2e2e2"></div>
<div style="position:absolute;left:42.1px;top:394.7px;width:0.80px;height:183.30px;background:#e4e4e4"></div>
<div style="position:absolute;left:63.9px;top:394.7px;width:0.80px;height:183.30px;background:#e4e4e4"></div>
<div style="position:absolute;left:82.19999999999999px;top:394.7px;width:0.80px;height:183.30px;background:#e4e4e4"></div>
<div style="position:absolute;left:98.89999999999999px;top:394.7px;width:0.80px;height:183.30px;background:#e4e4e4"></div>
<div style="position:absolute;left:230.9px;top:394.7px;width:0.80px;height:183.30px;background:#e4e4e4"></div>
<div style="position:absolute;left:311.0px;top:394.7px;width:0.80px;height:183.30px;background:#e4e4e4"></div>
<div style="position:absolute;left:363.0px;top:394.7px;width:0.80px;height:183.30px;background:#e4e4e4"></div>
<div style="position:absolute;left:445.20000000000005px;top:394.7px;width:0.80px;height:183.30px;background:#e4e4e4"></div>
<div style="position:absolute;left:539.4px;top:394.7px;width:0.80px;height:183.30px;background:#e4e4e4"></div>
<div style="position:absolute;left:641.1px;top:394.7px;width:0.80px;height:183.30px;background:#e4e4e4"></div>
<div style="position:absolute;left:698.9px;top:394.7px;width:0.80px;height:183.30px;background:#e4e4e4"></div>
<div style="position:absolute;left:829.4px;top:394.7px;width:0.80px;height:183.30px;background:#e4e4e4"></div>
<div style="position:absolute;left:907.0px;top:394.7px;width:0.80px;height:183.30px;background:#e4e4e4"></div>
<div style="position:absolute;left:972.3000000000001px;top:394.7px;width:0.80px;height:183.30px;background:#e4e4e4"></div>
<span style="position:absolute;top:399.56px;font-family:'Liberation Sans', sans-serif;font-size:5.6px;line-height:5.6px;font-weight:700;color:#3d4b5e;white-space:nowrap;left:47.00px;">#</span>
<div style="position:absolute;left:88.3px;top:401.2px;width:5.20px;height:5.00px;border:0.7px solid #c4c4c4;border-radius:1.4px;box-sizing:border-box;background:#fff"></div>
<span style="position:absolute;top:399.49px;font-family:'Liberation Sans', sans-serif;font-size:5.8px;line-height:5.8px;font-weight:700;color:#3d4b5e;white-space:nowrap;left:103.30px;transform:scaleX(0.951);transform-origin:left;">Phrase</span>
<span style="position:absolute;top:399.66px;font-family:'Liberation Sans', sans-serif;font-size:5.6px;line-height:5.6px;font-weight:700;color:#3d4b5e;white-space:nowrap;right:716.60px;">Cerebro IQ Score</span>
<span style="position:absolute;top:399.66px;font-family:'Liberation Sans', sans-serif;font-size:5.6px;line-height:5.6px;font-weight:700;color:#3d4b5e;white-space:nowrap;right:664.60px;">Search Volume</span>
<span style="position:absolute;top:399.66px;font-family:'Liberation Sans', sans-serif;font-size:5.6px;line-height:5.6px;font-weight:700;color:#3d4b5e;white-space:nowrap;right:582.40px;transform:scaleX(1.012);transform-origin:right;">Sponsored ASINs</span>
<span style="position:absolute;top:399.66px;font-family:'Liberation Sans', sans-serif;font-size:5.6px;line-height:5.6px;font-weight:700;color:#3d4b5e;white-space:nowrap;right:488.20px;">Competing Products</span>
<span style="position:absolute;top:399.66px;font-family:'Liberation Sans', sans-serif;font-size:5.6px;line-height:5.6px;font-weight:700;color:#3d4b5e;white-space:nowrap;right:386.50px;transform:scaleX(1.027);transform-origin:right;">CPR 8-Day Giveaways</span>
<span style="position:absolute;top:399.66px;font-family:'Liberation Sans', sans-serif;font-size:5.6px;line-height:5.6px;font-weight:400;color:#8a8a8a;white-space:nowrap;right:328.70px;transform:scaleX(1.072);transform-origin:right;">Match Type</span>
<span style="position:absolute;top:399.66px;font-family:'Liberation Sans', sans-serif;font-size:5.6px;line-height:5.6px;font-weight:700;color:#3d4b5e;white-space:nowrap;right:198.20px;transform:scaleX(1.013);transform-origin:right;">Amazon Recommended Rank</span>
<span style="position:absolute;top:399.66px;font-family:'Liberation Sans', sans-serif;font-size:5.6px;line-height:5.6px;font-weight:700;color:#3d4b5e;white-space:nowrap;right:120.60px;">Sponsored Rank</span>
<span style="position:absolute;top:399.66px;font-family:'Liberation Sans', sans-serif;font-size:5.6px;line-height:5.6px;font-weight:700;color:#3d4b5e;white-space:nowrap;right:55.30px;">Organic Rank</span>
<span style="position:absolute;top:414.84px;font-family:'Liberation Sans', sans-serif;font-size:6.8px;line-height:6.8px;font-weight:400;color:#8c8c8c;white-space:nowrap;left:46.80px;">1</span>
<svg style="position:absolute;left:68.8px;top:415.3px;width:5.00px;height:4.60px;overflow:visible" viewBox="0 0 5 4.6" preserveAspectRatio="none"><path d="M0.8 0.8 L4.2 3.8 M4.2 0.8 L0.8 3.8" stroke="#444" stroke-width="1.3"/></svg>
<div style="position:absolute;left:88.3px;top:417.09999999999997px;width:5.20px;height:5.00px;border:0.7px solid #c4c4c4;border-radius:1.4px;box-sizing:border-box;background:#fff"></div>
<span style="position:absolute;top:414.87px;font-family:'Liberation Sans', sans-serif;font-size:6.3px;line-height:6.3px;font-weight:400;color:#6a6a6a;white-space:nowrap;left:103.30px;transform:scaleX(0.940);transform-origin:left;">gothic home decor</span>
<svg style="position:absolute;left:153.20374999999999px;top:415.2px;width:5.80px;height:5.80px;overflow:visible" viewBox="0 0 5.8 5.8" preserveAspectRatio="none"><path d="M4.2 3.2 L4.2 5.2 L0.6 5.2 L0.6 1.4 L2.6 1.4" stroke="#3c5478" stroke-width="0.9" fill="none"/><path d="M2.4 3.2 L5.2 0.5 M3.2 0.5 L5.3 0.5 L5.3 2.6" stroke="#3c5478" stroke-width="0.9" fill="none"/></svg>
<div style="position:absolute;left:103.3px;top:422.0px;width:44.80px;height:8.90px;background:#a9a9a9"></div>
<span style="position:absolute;top:423.68px;font-family:'Liberation Sans', sans-serif;font-size:6.4px;line-height:6.4px;font-weight:400;color:#fff;white-space:nowrap;left:105.00px;transform:scaleX(0.817);transform-origin:left;">Amazon&#39;s <span style="color:#f2b48a">Choice</span></span>
<span style="position:absolute;top:415.12px;font-family:'Liberation Sans', sans-serif;font-size:6px;line-height:6px;font-weight:400;color:#777;white-space:nowrap;right:716.60px;">1,367</span>
<svg style="position:absolute;left:351.7px;top:415.3px;width:7.70px;height:5.00px;overflow:visible" viewBox="0 0 7.7 5" preserveAspectRatio="none"><path d="M0.5 0 L0.5 4.5 L7.7 4.5" stroke="#3f7fd0" stroke-width="0.9" fill="none"/><path d="M1.8 3.6 L3.6 1.8 L4.8 2.8 L7 0.6" stroke="#3f7fd0" stroke-width="1" fill="none"/><path d="M5.4 0.3 L7.4 0.3 L7.4 2.3Z" fill="#3f7fd0"/></svg>
<span style="position:absolute;top:415.12px;font-family:'Liberation Sans', sans-serif;font-size:6px;line-height:6px;font-weight:400;color:#4e9a32;white-space:nowrap;right:675.00px;">9,570</span>
<span style="position:absolute;top:415.12px;font-family:'Liberation Sans', sans-serif;font-size:6px;line-height:6px;font-weight:400;color:#777;white-space:nowrap;right:582.40px;">885</span>
<span style="position:absolute;top:415.12px;font-family:'Liberation Sans', sans-serif;font-size:6px;line-height:6px;font-weight:400;color:#777;white-space:nowrap;right:488.20px;">&gt;7,000</span>
<span style="position:absolute;top:415.12px;font-family:'Liberation Sans', sans-serif;font-size:6px;line-height:6px;font-weight:400;color:#777;white-space:nowrap;right:386.50px;">240</span>
<svg style="position:absolute;left:669px;top:415.2px;width:6.10px;height:6.10px;overflow:visible" viewBox="0 0 6.1 6.1" preserveAspectRatio="none"><circle cx="3.05" cy="3.05" r="3.05" fill="#2e3f5c"/><text x="3.05" y="4.8" font-size="4.6" font-weight="bold" fill="#fff" text-anchor="middle" font-family="Liberation Sans">A</text></svg>
<svg style="position:absolute;left:678.4px;top:415.2px;width:6.10px;height:6.10px;overflow:visible" viewBox="0 0 6.1 6.1" preserveAspectRatio="none"><circle cx="3.05" cy="3.05" r="3.05" fill="#2e3f5c"/><text x="3.05" y="4.8" font-size="4.6" font-weight="bold" fill="#fff" text-anchor="middle" font-family="Liberation Sans">S</text></svg>
<svg style="position:absolute;left:688.3px;top:415.2px;width:6.10px;height:6.10px;overflow:visible" viewBox="0 0 6.1 6.1" preserveAspectRatio="none"><circle cx="3.05" cy="3.05" r="3.05" fill="#2e3f5c"/><text x="3.05" y="4.8" font-size="4.6" font-weight="bold" fill="#fff" text-anchor="middle" font-family="Liberation Sans">D</text></svg>
<span style="position:absolute;top:415.12px;font-family:'Liberation Sans', sans-serif;font-size:6px;line-height:6px;font-weight:400;color:#777;white-space:nowrap;right:198.20px;">38</span>
<span style="position:absolute;top:415.12px;font-family:'Liberation Sans', sans-serif;font-size:6px;line-height:6px;font-weight:400;color:#777;white-space:nowrap;right:120.60px;">6</span>
<span style="position:absolute;top:415.12px;font-family:'Liberation Sans', sans-serif;font-size:6px;line-height:6px;font-weight:400;color:#777;white-space:nowrap;right:55.30px;">25</span>
<span style="position:absolute;top:439.64px;font-family:'Liberation Sans', sans-serif;font-size:6.8px;line-height:6.8px;font-weight:400;color:#8c8c8c;white-space:nowrap;left:46.80px;">2</span>
<svg style="position:absolute;left:68.8px;top:440.1px;width:5.00px;height:4.60px;overflow:visible" viewBox="0 0 5 4.6" preserveAspectRatio="none"><path d="M0.8 0.8 L4.2 3.8 M4.2 0.8 L0.8 3.8" stroke="#444" stroke-width="1.3"/></svg>
<div style="position:absolute;left:88.3px;top:441.9px;width:5.20px;height:5.00px;border:0.7px solid #c4c4c4;border-radius:1.4px;box-sizing:border-box;background:#fff"></div>
<span style="position:absolute;top:439.67px;font-family:'Liberation Sans', sans-serif;font-size:6.3px;line-height:6.3px;font-weight:400;color:#6a6a6a;white-space:nowrap;left:103.30px;transform:scaleX(0.940);transform-origin:left;">goth decor</span>
<svg style="position:absolute;left:132.47968749999998px;top:440.0px;width:5.80px;height:5.80px;overflow:visible" viewBox="0 0 5.8 5.8" preserveAspectRatio="none"><path d="M4.2 3.2 L4.2 5.2 L0.6 5.2 L0.6 1.4 L2.6 1.4" stroke="#3c5478" stroke-width="0.9" fill="none"/><path d="M2.4 3.2 L5.2 0.5 M3.2 0.5 L5.3 0.5 L5.3 2.6" stroke="#3c5478" stroke-width="0.9" fill="none"/></svg>
<div style="position:absolute;left:103.3px;top:446.8px;width:44.80px;height:8.90px;background:#a9a9a9"></div>
<span style="position:absolute;top:448.48px;font-family:'Liberation Sans', sans-serif;font-size:6.4px;line-height:6.4px;font-weight:400;color:#fff;white-space:nowrap;left:105.00px;transform:scaleX(0.817);transform-origin:left;">Amazon&#39;s <span style="color:#f2b48a">Choice</span></span>
<span style="position:absolute;top:439.92px;font-family:'Liberation Sans', sans-serif;font-size:6px;line-height:6px;font-weight:400;color:#777;white-space:nowrap;right:716.60px;">3,002</span>
<svg style="position:absolute;left:351.7px;top:440.1px;width:7.70px;height:5.00px;overflow:visible" viewBox="0 0 7.7 5" preserveAspectRatio="none"><path d="M0.5 0 L0.5 4.5 L7.7 4.5" stroke="#3f7fd0" stroke-width="0.9" fill="none"/><path d="M1.8 3.6 L3.6 1.8 L4.8 2.8 L7 0.6" stroke="#3f7fd0" stroke-width="1" fill="none"/><path d="M5.4 0.3 L7.4 0.3 L7.4 2.3Z" fill="#3f7fd0"/></svg>
<span style="position:absolute;top:439.92px;font-family:'Liberation Sans', sans-serif;font-size:6px;line-height:6px;font-weight:400;color:#4e9a32;white-space:nowrap;right:675.00px;">9,006</span>
<span style="position:absolute;top:439.92px;font-family:'Liberation Sans', sans-serif;font-size:6px;line-height:6px;font-weight:400;color:#777;white-space:nowrap;right:582.40px;">730</span>
<span style="position:absolute;top:439.92px;font-family:'Liberation Sans', sans-serif;font-size:6px;line-height:6px;font-weight:400;color:#777;white-space:nowrap;right:488.20px;">&gt;3,000</span>
<span style="position:absolute;top:439.92px;font-family:'Liberation Sans', sans-serif;font-size:6px;line-height:6px;font-weight:400;color:#777;white-space:nowrap;right:386.50px;">176</span>
<svg style="position:absolute;left:669px;top:440.0px;width:6.10px;height:6.10px;overflow:visible" viewBox="0 0 6.1 6.1" preserveAspectRatio="none"><circle cx="3.05" cy="3.05" r="3.05" fill="#2e3f5c"/><text x="3.05" y="4.8" font-size="4.6" font-weight="bold" fill="#fff" text-anchor="middle" font-family="Liberation Sans">A</text></svg>
<svg style="position:absolute;left:678.4px;top:440.0px;width:6.10px;height:6.10px;overflow:visible" viewBox="0 0 6.1 6.1" preserveAspectRatio="none"><circle cx="3.05" cy="3.05" r="3.05" fill="#2e3f5c"/><text x="3.05" y="4.8" font-size="4.6" font-weight="bold" fill="#fff" text-anchor="middle" font-family="Liberation Sans">S</text></svg>
<svg style="position:absolute;left:688.3px;top:440.0px;width:6.10px;height:6.10px;overflow:visible" viewBox="0 0 6.1 6.1" preserveAspectRatio="none"><circle cx="3.05" cy="3.05" r="3.05" fill="#2e3f5c"/><text x="3.05" y="4.8" font-size="4.6" font-weight="bold" fill="#fff" text-anchor="middle" font-family="Liberation Sans">D</text></svg>
<span style="position:absolute;top:439.92px;font-family:'Liberation Sans', sans-serif;font-size:6px;line-height:6px;font-weight:400;color:#777;white-space:nowrap;right:198.20px;">541</span>
<span style="position:absolute;top:439.92px;font-family:'Liberation Sans', sans-serif;font-size:6px;line-height:6px;font-weight:400;color:#777;white-space:nowrap;right:120.60px;">21</span>
<span style="position:absolute;top:439.92px;font-family:'Liberation Sans', sans-serif;font-size:6px;line-height:6px;font-weight:400;color:#777;white-space:nowrap;right:55.30px;">21</span>
<span style="position:absolute;top:464.44px;font-family:'Liberation Sans', sans-serif;font-size:6.8px;line-height:6.8px;font-weight:400;color:#8c8c8c;white-space:nowrap;left:46.80px;">3</span>
<svg style="position:absolute;left:68.8px;top:464.90000000000003px;width:5.00px;height:4.60px;overflow:visible" viewBox="0 0 5 4.6" preserveAspectRatio="none"><path d="M0.8 0.8 L4.2 3.8 M4.2 0.8 L0.8 3.8" stroke="#444" stroke-width="1.3"/></svg>
<div style="position:absolute;left:88.3px;top:466.7px;width:5.20px;height:5.00px;border:0.7px solid #c4c4c4;border-radius:1.4px;box-sizing:border-box;background:#fff"></div>
<span style="position:absolute;top:464.47px;font-family:'Liberation Sans', sans-serif;font-size:6.3px;line-height:6.3px;font-weight:400;color:#6a6a6a;white-space:nowrap;left:103.30px;transform:scaleX(0.940);transform-origin:left;">coffin shelf</span>
<svg style="position:absolute;left:132.7px;top:464.8px;width:5.80px;height:5.80px;overflow:visible" viewBox="0 0 5.8 5.8" preserveAspectRatio="none"><path d="M4.2 3.2 L4.2 5.2 L0.6 5.2 L0.6 1.4 L2.6 1.4" stroke="#3c5478" stroke-width="0.9" fill="none"/><path d="M2.4 3.2 L5.2 0.5 M3.2 0.5 L5.3 0.5 L5.3 2.6" stroke="#3c5478" stroke-width="0.9" fill="none"/></svg>
<div style="position:absolute;left:103.3px;top:471.6px;width:44.80px;height:8.90px;background:#a9a9a9"></div>
<span style="position:absolute;top:473.28px;font-family:'Liberation Sans', sans-serif;font-size:6.4px;line-height:6.4px;font-weight:400;color:#fff;white-space:nowrap;left:105.00px;transform:scaleX(0.817);transform-origin:left;">Amazon&#39;s <span style="color:#f2b48a">Choice</span></span>
<span style="position:absolute;top:464.72px;font-family:'Liberation Sans', sans-serif;font-size:6px;line-height:6px;font-weight:400;color:#777;white-space:nowrap;right:716.60px;">22,214</span>
<svg style="position:absolute;left:351.7px;top:464.90000000000003px;width:7.70px;height:5.00px;overflow:visible" viewBox="0 0 7.7 5" preserveAspectRatio="none"><path d="M0.5 0 L0.5 4.5 L7.7 4.5" stroke="#3f7fd0" stroke-width="0.9" fill="none"/><path d="M1.8 3.6 L3.6 1.8 L4.8 2.8 L7 0.6" stroke="#3f7fd0" stroke-width="1" fill="none"/><path d="M5.4 0.3 L7.4 0.3 L7.4 2.3Z" fill="#3f7fd0"/></svg>
<span style="position:absolute;top:464.72px;font-family:'Liberation Sans', sans-serif;font-size:6px;line-height:6px;font-weight:400;color:#4e9a32;white-space:nowrap;right:675.00px;">7,175</span>
<span style="position:absolute;top:464.72px;font-family:'Liberation Sans', sans-serif;font-size:6px;line-height:6px;font-weight:400;color:#777;white-space:nowrap;right:582.40px;">578</span>
<span style="position:absolute;top:464.72px;font-family:'Liberation Sans', sans-serif;font-size:6px;line-height:6px;font-weight:400;color:#777;white-space:nowrap;right:488.20px;">323</span>
<span style="position:absolute;top:464.72px;font-family:'Liberation Sans', sans-serif;font-size:6px;line-height:6px;font-weight:400;color:#777;white-space:nowrap;right:386.50px;">144</span>
<svg style="position:absolute;left:669px;top:464.8px;width:6.10px;height:6.10px;overflow:visible" viewBox="0 0 6.1 6.1" preserveAspectRatio="none"><circle cx="3.05" cy="3.05" r="3.05" fill="#2e3f5c"/><text x="3.05" y="4.8" font-size="4.6" font-weight="bold" fill="#fff" text-anchor="middle" font-family="Liberation Sans">A</text></svg>
<svg style="position:absolute;left:678.4px;top:464.8px;width:6.10px;height:6.10px;overflow:visible" viewBox="0 0 6.1 6.1" preserveAspectRatio="none"><circle cx="3.05" cy="3.05" r="3.05" fill="#2e3f5c"/><text x="3.05" y="4.8" font-size="4.6" font-weight="bold" fill="#fff" text-anchor="middle" font-family="Liberation Sans">S</text></svg>
<svg style="position:absolute;left:688.3px;top:464.8px;width:6.10px;height:6.10px;overflow:visible" viewBox="0 0 6.1 6.1" preserveAspectRatio="none"><circle cx="3.05" cy="3.05" r="3.05" fill="#2e3f5c"/><text x="3.05" y="4.8" font-size="4.6" font-weight="bold" fill="#fff" text-anchor="middle" font-family="Liberation Sans">D</text></svg>
<span style="position:absolute;top:464.72px;font-family:'Liberation Sans', sans-serif;font-size:6px;line-height:6px;font-weight:400;color:#777;white-space:nowrap;right:198.20px;">2</span>
<span style="position:absolute;top:464.72px;font-family:'Liberation Sans', sans-serif;font-size:6px;line-height:6px;font-weight:400;color:#777;white-space:nowrap;right:120.60px;">1</span>
<span style="position:absolute;top:464.72px;font-family:'Liberation Sans', sans-serif;font-size:6px;line-height:6px;font-weight:400;color:#777;white-space:nowrap;right:55.30px;">6</span>
<span style="position:absolute;top:489.24px;font-family:'Liberation Sans', sans-serif;font-size:6.8px;line-height:6.8px;font-weight:400;color:#8c8c8c;white-space:nowrap;left:46.80px;">4</span>
<svg style="position:absolute;left:68.8px;top:489.70000000000005px;width:5.00px;height:4.60px;overflow:visible" viewBox="0 0 5 4.6" preserveAspectRatio="none"><path d="M0.8 0.8 L4.2 3.8 M4.2 0.8 L0.8 3.8" stroke="#444" stroke-width="1.3"/></svg>
<div style="position:absolute;left:88.3px;top:491.5px;width:5.20px;height:5.00px;border:0.7px solid #c4c4c4;border-radius:1.4px;box-sizing:border-box;background:#fff"></div>
<span style="position:absolute;top:489.27px;font-family:'Liberation Sans', sans-serif;font-size:6.3px;line-height:6.3px;font-weight:400;color:#6a6a6a;white-space:nowrap;left:103.30px;transform:scaleX(0.940);transform-origin:left;">halloween coffin</span>
<svg style="position:absolute;left:146.84406249999998px;top:489.6px;width:5.80px;height:5.80px;overflow:visible" viewBox="0 0 5.8 5.8" preserveAspectRatio="none"><path d="M4.2 3.2 L4.2 5.2 L0.6 5.2 L0.6 1.4 L2.6 1.4" stroke="#3c5478" stroke-width="0.9" fill="none"/><path d="M2.4 3.2 L5.2 0.5 M3.2 0.5 L5.3 0.5 L5.3 2.6" stroke="#3c5478" stroke-width="0.9" fill="none"/></svg>
<div style="position:absolute;left:103.3px;top:496.40000000000003px;width:44.80px;height:8.90px;background:#a9a9a9"></div>
<span style="position:absolute;top:498.08px;font-family:'Liberation Sans', sans-serif;font-size:6.4px;line-height:6.4px;font-weight:400;color:#fff;white-space:nowrap;left:105.00px;transform:scaleX(0.817);transform-origin:left;">Amazon&#39;s <span style="color:#f2b48a">Choice</span></span>
<span style="position:absolute;top:489.52px;font-family:'Liberation Sans', sans-serif;font-size:6px;line-height:6px;font-weight:400;color:#777;white-space:nowrap;right:716.60px;">1,665</span>
<svg style="position:absolute;left:351.7px;top:489.70000000000005px;width:7.70px;height:5.00px;overflow:visible" viewBox="0 0 7.7 5" preserveAspectRatio="none"><path d="M0.5 0 L0.5 4.5 L7.7 4.5" stroke="#3f7fd0" stroke-width="0.9" fill="none"/><path d="M1.8 3.6 L3.6 1.8 L4.8 2.8 L7 0.6" stroke="#3f7fd0" stroke-width="1" fill="none"/><path d="M5.4 0.3 L7.4 0.3 L7.4 2.3Z" fill="#3f7fd0"/></svg>
<span style="position:absolute;top:489.52px;font-family:'Liberation Sans', sans-serif;font-size:6px;line-height:6px;font-weight:400;color:#4e9a32;white-space:nowrap;right:675.00px;">3,330</span>
<span style="position:absolute;top:489.52px;font-family:'Liberation Sans', sans-serif;font-size:6px;line-height:6px;font-weight:400;color:#777;white-space:nowrap;right:582.40px;">1053</span>
<span style="position:absolute;top:489.52px;font-family:'Liberation Sans', sans-serif;font-size:6px;line-height:6px;font-weight:400;color:#777;white-space:nowrap;right:488.20px;">&gt;2,000</span>
<span style="position:absolute;top:489.52px;font-family:'Liberation Sans', sans-serif;font-size:6px;line-height:6px;font-weight:400;color:#777;white-space:nowrap;right:386.50px;">72</span>
<svg style="position:absolute;left:669px;top:489.6px;width:6.10px;height:6.10px;overflow:visible" viewBox="0 0 6.1 6.1" preserveAspectRatio="none"><circle cx="3.05" cy="3.05" r="3.05" fill="#2e3f5c"/><text x="3.05" y="4.8" font-size="4.6" font-weight="bold" fill="#fff" text-anchor="middle" font-family="Liberation Sans">A</text></svg>
<svg style="position:absolute;left:678.4px;top:489.6px;width:6.10px;height:6.10px;overflow:visible" viewBox="0 0 6.1 6.1" preserveAspectRatio="none"><circle cx="3.05" cy="3.05" r="3.05" fill="#2e3f5c"/><text x="3.05" y="4.8" font-size="4.6" font-weight="bold" fill="#fff" text-anchor="middle" font-family="Liberation Sans">S</text></svg>
<svg style="position:absolute;left:688.3px;top:489.6px;width:6.10px;height:6.10px;overflow:visible" viewBox="0 0 6.1 6.1" preserveAspectRatio="none"><circle cx="3.05" cy="3.05" r="3.05" fill="#2e3f5c"/><text x="3.05" y="4.8" font-size="4.6" font-weight="bold" fill="#fff" text-anchor="middle" font-family="Liberation Sans">D</text></svg>
<span style="position:absolute;top:489.52px;font-family:'Liberation Sans', sans-serif;font-size:6px;line-height:6px;font-weight:400;color:#777;white-space:nowrap;right:198.20px;">718</span>
<span style="position:absolute;top:489.52px;font-family:'Liberation Sans', sans-serif;font-size:6px;line-height:6px;font-weight:400;color:#777;white-space:nowrap;right:120.60px;">31</span>
<span style="position:absolute;top:489.52px;font-family:'Liberation Sans', sans-serif;font-size:6px;line-height:6px;font-weight:400;color:#777;white-space:nowrap;right:55.30px;">19</span>
<span style="position:absolute;top:514.04px;font-family:'Liberation Sans', sans-serif;font-size:6.8px;line-height:6.8px;font-weight:400;color:#8c8c8c;white-space:nowrap;left:46.80px;">5</span>
<svg style="position:absolute;left:68.8px;top:514.5px;width:5.00px;height:4.60px;overflow:visible" viewBox="0 0 5 4.6" preserveAspectRatio="none"><path d="M0.8 0.8 L4.2 3.8 M4.2 0.8 L0.8 3.8" stroke="#444" stroke-width="1.3"/></svg>
<div style="position:absolute;left:88.3px;top:516.3px;width:5.20px;height:5.00px;border:0.7px solid #c4c4c4;border-radius:1.4px;box-sizing:border-box;background:#fff"></div>
<span style="position:absolute;top:514.07px;font-family:'Liberation Sans', sans-serif;font-size:6.3px;line-height:6.3px;font-weight:400;color:#6a6a6a;white-space:nowrap;left:103.30px;transform:scaleX(0.940);transform-origin:left;">baphomet statue</span>
<svg style="position:absolute;left:148.6065625px;top:514.4px;width:5.80px;height:5.80px;overflow:visible" viewBox="0 0 5.8 5.8" preserveAspectRatio="none"><path d="M4.2 3.2 L4.2 5.2 L0.6 5.2 L0.6 1.4 L2.6 1.4" stroke="#3c5478" stroke-width="0.9" fill="none"/><path d="M2.4 3.2 L5.2 0.5 M3.2 0.5 L5.3 0.5 L5.3 2.6" stroke="#3c5478" stroke-width="0.9" fill="none"/></svg>
<div style="position:absolute;left:103.3px;top:521.1999999999999px;width:44.80px;height:8.90px;background:#a9a9a9"></div>
<span style="position:absolute;top:522.88px;font-family:'Liberation Sans', sans-serif;font-size:6.4px;line-height:6.4px;font-weight:400;color:#fff;white-space:nowrap;left:105.00px;transform:scaleX(0.817);transform-origin:left;">Amazon&#39;s <span style="color:#f2b48a">Choice</span></span>
<span style="position:absolute;top:514.32px;font-family:'Liberation Sans', sans-serif;font-size:6px;line-height:6px;font-weight:400;color:#777;white-space:nowrap;right:716.60px;">17,463</span>
<svg style="position:absolute;left:351.7px;top:514.5px;width:7.70px;height:5.00px;overflow:visible" viewBox="0 0 7.7 5" preserveAspectRatio="none"><path d="M0.5 0 L0.5 4.5 L7.7 4.5" stroke="#3f7fd0" stroke-width="0.9" fill="none"/><path d="M1.8 3.6 L3.6 1.8 L4.8 2.8 L7 0.6" stroke="#3f7fd0" stroke-width="1" fill="none"/><path d="M5.4 0.3 L7.4 0.3 L7.4 2.3Z" fill="#3f7fd0"/></svg>
<span style="position:absolute;top:514.32px;font-family:'Liberation Sans', sans-serif;font-size:6px;line-height:6px;font-weight:400;color:#4e9a32;white-space:nowrap;right:675.00px;">3,318</span>
<span style="position:absolute;top:514.32px;font-family:'Liberation Sans', sans-serif;font-size:6px;line-height:6px;font-weight:400;color:#777;white-space:nowrap;right:582.40px;">487</span>
<span style="position:absolute;top:514.32px;font-family:'Liberation Sans', sans-serif;font-size:6px;line-height:6px;font-weight:400;color:#777;white-space:nowrap;right:488.20px;">190</span>
<span style="position:absolute;top:514.32px;font-family:'Liberation Sans', sans-serif;font-size:6px;line-height:6px;font-weight:400;color:#777;white-space:nowrap;right:386.50px;">72</span>
<svg style="position:absolute;left:669px;top:514.4px;width:6.10px;height:6.10px;overflow:visible" viewBox="0 0 6.1 6.1" preserveAspectRatio="none"><circle cx="3.05" cy="3.05" r="3.05" fill="#2e3f5c"/><text x="3.05" y="4.8" font-size="4.6" font-weight="bold" fill="#fff" text-anchor="middle" font-family="Liberation Sans">A</text></svg>
<svg style="position:absolute;left:678.4px;top:514.4px;width:6.10px;height:6.10px;overflow:visible" viewBox="0 0 6.1 6.1" preserveAspectRatio="none"><circle cx="3.05" cy="3.05" r="3.05" fill="#2e3f5c"/><text x="3.05" y="4.8" font-size="4.6" font-weight="bold" fill="#fff" text-anchor="middle" font-family="Liberation Sans">S</text></svg>
<svg style="position:absolute;left:688.3px;top:514.4px;width:6.10px;height:6.10px;overflow:visible" viewBox="0 0 6.1 6.1" preserveAspectRatio="none"><circle cx="3.05" cy="3.05" r="3.05" fill="#2e3f5c"/><text x="3.05" y="4.8" font-size="4.6" font-weight="bold" fill="#fff" text-anchor="middle" font-family="Liberation Sans">D</text></svg>
<span style="position:absolute;top:514.32px;font-family:'Liberation Sans', sans-serif;font-size:6px;line-height:6px;font-weight:400;color:#777;white-space:nowrap;right:198.20px;">772</span>
<span style="position:absolute;top:514.32px;font-family:'Liberation Sans', sans-serif;font-size:6px;line-height:6px;font-weight:400;color:#777;white-space:nowrap;right:120.60px;">3</span>
<span style="position:absolute;top:514.32px;font-family:'Liberation Sans', sans-serif;font-size:6px;line-height:6px;font-weight:400;color:#777;white-space:nowrap;right:55.30px;">28</span>
<span style="position:absolute;top:538.84px;font-family:'Liberation Sans', sans-serif;font-size:6.8px;line-height:6.8px;font-weight:400;color:#8c8c8c;white-space:nowrap;left:46.80px;">6</span>
<svg style="position:absolute;left:68.8px;top:539.3000000000001px;width:5.00px;height:4.60px;overflow:visible" viewBox="0 0 5 4.6" preserveAspectRatio="none"><path d="M0.8 0.8 L4.2 3.8 M4.2 0.8 L0.8 3.8" stroke="#444" stroke-width="1.3"/></svg>
<div style="position:absolute;left:88.3px;top:541.1px;width:5.20px;height:5.00px;border:0.7px solid #c4c4c4;border-radius:1.4px;box-sizing:border-box;background:#fff"></div>
<span style="position:absolute;top:538.87px;font-family:'Liberation Sans', sans-serif;font-size:6.3px;line-height:6.3px;font-weight:400;color:#6a6a6a;white-space:nowrap;left:103.30px;transform:scaleX(0.940);transform-origin:left;">gothic furniture</span>
<svg style="position:absolute;left:143.65687499999999px;top:539.2px;width:5.80px;height:5.80px;overflow:visible" viewBox="0 0 5.8 5.8" preserveAspectRatio="none"><path d="M4.2 3.2 L4.2 5.2 L0.6 5.2 L0.6 1.4 L2.6 1.4" stroke="#3c5478" stroke-width="0.9" fill="none"/><path d="M2.4 3.2 L5.2 0.5 M3.2 0.5 L5.3 0.5 L5.3 2.6" stroke="#3c5478" stroke-width="0.9" fill="none"/></svg>
<div style="position:absolute;left:103.3px;top:546.0px;width:44.80px;height:8.90px;background:#a9a9a9"></div>
<span style="position:absolute;top:547.68px;font-family:'Liberation Sans', sans-serif;font-size:6.4px;line-height:6.4px;font-weight:400;color:#fff;white-space:nowrap;left:105.00px;transform:scaleX(0.817);transform-origin:left;">Amazon&#39;s <span style="color:#f2b48a">Choice</span></span>
<span style="position:absolute;top:539.12px;font-family:'Liberation Sans', sans-serif;font-size:6px;line-height:6px;font-weight:400;color:#777;white-space:nowrap;right:716.60px;">3,485</span>
<svg style="position:absolute;left:351.7px;top:539.3000000000001px;width:7.70px;height:5.00px;overflow:visible" viewBox="0 0 7.7 5" preserveAspectRatio="none"><path d="M0.5 0 L0.5 4.5 L7.7 4.5" stroke="#3f7fd0" stroke-width="0.9" fill="none"/><path d="M1.8 3.6 L3.6 1.8 L4.8 2.8 L7 0.6" stroke="#3f7fd0" stroke-width="1" fill="none"/><path d="M5.4 0.3 L7.4 0.3 L7.4 2.3Z" fill="#3f7fd0"/></svg>
<span style="position:absolute;top:539.12px;font-family:'Liberation Sans', sans-serif;font-size:6px;line-height:6px;font-weight:400;color:#4e9a32;white-space:nowrap;right:675.00px;">3,318</span>
<span style="position:absolute;top:539.12px;font-family:'Liberation Sans', sans-serif;font-size:6px;line-height:6px;font-weight:400;color:#777;white-space:nowrap;right:582.40px;">867</span>
<span style="position:absolute;top:539.12px;font-family:'Liberation Sans', sans-serif;font-size:6px;line-height:6px;font-weight:400;color:#777;white-space:nowrap;right:488.20px;">&gt;952</span>
<span style="position:absolute;top:539.12px;font-family:'Liberation Sans', sans-serif;font-size:6px;line-height:6px;font-weight:400;color:#777;white-space:nowrap;right:386.50px;">72</span>
<svg style="position:absolute;left:678.4px;top:539.2px;width:6.10px;height:6.10px;overflow:visible" viewBox="0 0 6.1 6.1" preserveAspectRatio="none"><circle cx="3.05" cy="3.05" r="3.05" fill="#2e3f5c"/><text x="3.05" y="4.8" font-size="4.6" font-weight="bold" fill="#fff" text-anchor="middle" font-family="Liberation Sans">S</text></svg>
<svg style="position:absolute;left:688.3px;top:539.2px;width:6.10px;height:6.10px;overflow:visible" viewBox="0 0 6.1 6.1" preserveAspectRatio="none"><circle cx="3.05" cy="3.05" r="3.05" fill="#2e3f5c"/><text x="3.05" y="4.8" font-size="4.6" font-weight="bold" fill="#fff" text-anchor="middle" font-family="Liberation Sans">D</text></svg>
<span style="position:absolute;top:539.12px;font-family:'Liberation Sans', sans-serif;font-size:6px;line-height:6px;font-weight:400;color:#777;white-space:nowrap;right:198.20px;">-</span>
<span style="position:absolute;top:539.12px;font-family:'Liberation Sans', sans-serif;font-size:6px;line-height:6px;font-weight:400;color:#777;white-space:nowrap;right:120.60px;">3</span>
<span style="position:absolute;top:539.12px;font-family:'Liberation Sans', sans-serif;font-size:6px;line-height:6px;font-weight:400;color:#777;white-space:nowrap;right:55.30px;">13</span>
<span style="position:absolute;top:563.64px;font-family:'Liberation Sans', sans-serif;font-size:6.8px;line-height:6.8px;font-weight:400;color:#8c8c8c;white-space:nowrap;left:46.80px;">7</span>
<svg style="position:absolute;left:68.8px;top:564.1px;width:5.00px;height:4.60px;overflow:visible" viewBox="0 0 5 4.6" preserveAspectRatio="none"><path d="M0.8 0.8 L4.2 3.8 M4.2 0.8 L0.8 3.8" stroke="#444" stroke-width="1.3"/></svg>
<div style="position:absolute;left:88.3px;top:565.9px;width:5.20px;height:5.00px;border:0.7px solid #c4c4c4;border-radius:1.4px;box-sizing:border-box;background:#fff"></div>
<span style="position:absolute;top:563.67px;font-family:'Liberation Sans', sans-serif;font-size:6.3px;line-height:6.3px;font-weight:400;color:#6a6a6a;white-space:nowrap;left:103.30px;transform:scaleX(0.940);transform-origin:left;">goth decor home</span>
<svg style="position:absolute;left:148.9296875px;top:564.0px;width:5.80px;height:5.80px;overflow:visible" viewBox="0 0 5.8 5.8" preserveAspectRatio="none"><path d="M4.2 3.2 L4.2 5.2 L0.6 5.2 L0.6 1.4 L2.6 1.4" stroke="#3c5478" stroke-width="0.9" fill="none"/><path d="M2.4 3.2 L5.2 0.5 M3.2 0.5 L5.3 0.5 L5.3 2.6" stroke="#3c5478" stroke-width="0.9" fill="none"/></svg>
<div style="position:absolute;left:103.3px;top:570.8px;width:44.80px;height:8.90px;background:#a9a9a9"></div>
<span style="position:absolute;top:572.48px;font-family:'Liberation Sans', sans-serif;font-size:6.4px;line-height:6.4px;font-weight:400;color:#fff;white-space:nowrap;left:105.00px;transform:scaleX(0.817);transform-origin:left;">Amazon&#39;s <span style="color:#f2b48a">Choice</span></span>
<span style="position:absolute;top:563.92px;font-family:'Liberation Sans', sans-serif;font-size:6px;line-height:6px;font-weight:400;color:#777;white-space:nowrap;right:716.60px;">1,290</span>
<svg style="position:absolute;left:351.7px;top:564.1px;width:7.70px;height:5.00px;overflow:visible" viewBox="0 0 7.7 5" preserveAspectRatio="none"><path d="M0.5 0 L0.5 4.5 L7.7 4.5" stroke="#3f7fd0" stroke-width="0.9" fill="none"/><path d="M1.8 3.6 L3.6 1.8 L4.8 2.8 L7 0.6" stroke="#3f7fd0" stroke-width="1" fill="none"/><path d="M5.4 0.3 L7.4 0.3 L7.4 2.3Z" fill="#3f7fd0"/></svg>
<span style="position:absolute;top:563.92px;font-family:'Liberation Sans', sans-serif;font-size:6px;line-height:6px;font-weight:400;color:#4e9a32;white-space:nowrap;right:675.00px;">2,579</span>
<span style="position:absolute;top:563.92px;font-family:'Liberation Sans', sans-serif;font-size:6px;line-height:6px;font-weight:400;color:#777;white-space:nowrap;right:582.40px;">984</span>
<span style="position:absolute;top:563.92px;font-family:'Liberation Sans', sans-serif;font-size:6px;line-height:6px;font-weight:400;color:#777;white-space:nowrap;right:488.20px;">&gt;2,000</span>
<span style="position:absolute;top:563.92px;font-family:'Liberation Sans', sans-serif;font-size:6px;line-height:6px;font-weight:400;color:#777;white-space:nowrap;right:386.50px;">56</span>
<svg style="position:absolute;left:678.4px;top:564.0px;width:6.10px;height:6.10px;overflow:visible" viewBox="0 0 6.1 6.1" preserveAspectRatio="none"><circle cx="3.05" cy="3.05" r="3.05" fill="#2e3f5c"/><text x="3.05" y="4.8" font-size="4.6" font-weight="bold" fill="#fff" text-anchor="middle" font-family="Liberation Sans">S</text></svg>
<svg style="position:absolute;left:688.3px;top:564.0px;width:6.10px;height:6.10px;overflow:visible" viewBox="0 0 6.1 6.1" preserveAspectRatio="none"><circle cx="3.05" cy="3.05" r="3.05" fill="#2e3f5c"/><text x="3.05" y="4.8" font-size="4.6" font-weight="bold" fill="#fff" text-anchor="middle" font-family="Liberation Sans">D</text></svg>
<span style="position:absolute;top:563.92px;font-family:'Liberation Sans', sans-serif;font-size:6px;line-height:6px;font-weight:400;color:#777;white-space:nowrap;right:198.20px;">-</span>
<span style="position:absolute;top:563.92px;font-family:'Liberation Sans', sans-serif;font-size:6px;line-height:6px;font-weight:400;color:#777;white-space:nowrap;right:120.60px;">84</span>
<span style="position:absolute;top:563.92px;font-family:'Liberation Sans', sans-serif;font-size:6px;line-height:6px;font-weight:400;color:#777;white-space:nowrap;right:55.30px;">4</span>
<svg style="position:absolute;left:959px;top:545.4px;width:25.80px;height:26.00px;overflow:visible" viewBox="0 0 25.8 26" preserveAspectRatio="none"><circle cx="12.9" cy="13" r="12.9" fill="#143a7b"/><path d="M8 7.5 Q8 7 8.5 7 L17.3 7 Q17.8 7 17.8 7.5 L17.8 18.8 L15.5 17.3 L8.5 17.3 Q8 17.3 8 16.8 Z" fill="#fff"/><path d="M10 13.6 Q12.9 15.2 15.8 13.6" stroke="#143a7b" stroke-width="0.8" fill="none"/></svg>
<svg style="position:absolute;left:955px;top:56px;width:17.00px;height:77.00px;overflow:visible" viewBox="0 0 17 77" preserveAspectRatio="none"><path d="M7.6 1.8 L8.3 58" stroke="#00347a" stroke-width="2.8" fill="none"/><path d="M1.4 57 L14.9 57 L8.2 75.8 Z" fill="#00347a"/></svg>
<div style="position:absolute;left:665px;top:137px;width:359.00px;height:260.00px;background:#00347a"></div>
<div style="position:absolute;left:663px;top:134.3px;width:347.50px;height:247.30px;background:#fff;border:2.6px solid #00347a;box-sizing:border-box"></div>
<div style="position:absolute;left:983.6px;top:200px;width:24.30px;height:179.00px;background:#f3f3f4"></div>
<div style="position:absolute;left:665.6px;top:198.2px;width:342.30px;height:1.80px;background:#3b7fd0"></div>
<div style="position:absolute;left:665.6px;top:227.1px;width:107.90px;height:1.10px;background:#d9d9d9"></div>
<div style="position:absolute;left:665.6px;top:271.9px;width:107.90px;height:1.10px;background:#d9d9d9"></div>
<div style="position:absolute;left:665.6px;top:372.6px;width:318.00px;height:1.60px;background:#dcdcdc"></div>
<div style="position:absolute;left:678.3px;top:139px;width:176.70px;height:44.80px;background:#fff;border:1px solid #e3e3e3;border-radius:5px;box-sizing:border-box"></div>
<div style="position:absolute;left:862.7px;top:139px;width:135.50px;height:44.80px;background:#fff;border:1px solid #e3e3e3;border-radius:5px;box-sizing:border-box"></div>
<svg style="position:absolute;left:695.7px;top:151px;width:14.10px;height:18.00px;overflow:visible" viewBox="0 0 14.1 18" preserveAspectRatio="none"><path d="M0.8 0 L13.3 0 Q14.1 0 14.1 0.8 L14.1 18 L7.05 13.2 L0 18 L0 0.8 Q0 0 0.8 0Z" fill="#6d6d70"/></svg>
<span style="position:absolute;top:151.03px;font-family:'Liberation Sans', sans-serif;font-size:20.4px;line-height:20.4px;font-weight:400;color:#6b6b6b;white-space:nowrap;left:717.00px;transform:scaleX(0.927);transform-origin:left;">Deleted words</span>
<svg style="position:absolute;left:880px;top:153px;width:19.00px;height:17.00px;overflow:visible" viewBox="0 0 19 17" preserveAspectRatio="none"><path d="M7.8 0 L11.2 0 L11.2 7 L14.6 7 L9.5 12.2 L4.4 7 L7.8 7 Z" fill="#6d6d70"/><path d="M0 11.5 L5.6 11.5 L9.5 14.8 L13.4 11.5 L19 11.5 L19 17 L0 17 Z" fill="#6d6d70"/><circle cx="15" cy="14.5" r="0.7" fill="#fff"/><circle cx="17" cy="14.5" r="0.7" fill="#fff"/></svg>
<span style="position:absolute;top:151.03px;font-family:'Liberation Sans', sans-serif;font-size:20.4px;line-height:20.4px;font-weight:400;color:#6b6b6b;white-space:nowrap;left:904.00px;transform:scaleX(0.945);transform-origin:left;">Export</span>
<svg style="position:absolute;left:970px;top:157.6px;width:10.00px;height:4.80px;overflow:visible" viewBox="0 0 10 4.8" preserveAspectRatio="none"><path d="M0 0 L10 0 L5 4.8 Z" fill="#6d6d70"/></svg>
<div style="position:absolute;left:773.5px;top:187.5px;width:222.90px;height:184.80px;background:#fff;border:1px solid #e2e2e2;border-radius:5px;box-sizing:border-box;box-shadow:0 3px 8px rgba(0,0,0,0.10)"></div>
<div style="position:absolute;left:774.5px;top:279.3px;width:220.90px;height:1.10px;background:#e9e9e9"></div>
<svg style="position:absolute;left:806.3px;top:204.2px;width:17.10px;height:17.10px;overflow:visible" viewBox="0 0 17.1 17.1" preserveAspectRatio="none"><path d="M6.6 0 L11.6 5.6 L8.6 5.6 L8.6 11 L4.6 11 L4.6 5.6 L1.6 5.6 Z" fill="#3d83e8"/><path d="M0 9.5 L3 9.5 L3 12.5 L14.1 12.5 L14.1 9.5 L17.1 9.5 L17.1 17.1 L0 17.1 Z" fill="#3d83e8"/><circle cx="14" cy="15" r="0.6" fill="#fff"/><circle cx="15.6" cy="15" r="0.6" fill="#fff"/></svg>
<span style="position:absolute;top:204.60px;font-family:'Liberation Sans', sans-serif;font-size:17.6px;line-height:17.6px;font-weight:400;color:#444;white-space:nowrap;left:828.00px;transform:scaleX(0.923);transform-origin:left;">CSV</span>
<svg style="position:absolute;left:806px;top:240.8px;width:13.20px;height:17.20px;overflow:visible" viewBox="0 0 13.2 17.2" preserveAspectRatio="none"><path d="M1.2 0.6 L8.5 0.6 L12.6 4.7 L12.6 16.4 Q12.6 16.6 12.4 16.6 L1.2 16.6 Q0.6 16.6 0.6 16 L0.6 1.2 Q0.6 0.6 1.2 0.6Z" fill="none" stroke="#58a85c" stroke-width="1.2"/><path d="M8.5 0.6 L8.5 4.7 L12.6 4.7" fill="none" stroke="#58a85c" stroke-width="1"/><path d="M3.8 8 L8.6 14 M8.6 8 L3.8 14" stroke="#58a85c" stroke-width="1.3"/></svg>
<span style="position:absolute;top:241.20px;font-family:'Liberation Sans', sans-serif;font-size:17.6px;line-height:17.6px;font-weight:400;color:#444;white-space:nowrap;left:824.00px;transform:scaleX(0.913);transform-origin:left;">Excel</span>
<svg style="position:absolute;left:808.2px;top:300px;width:14.60px;height:14.00px;overflow:visible" viewBox="0 0 14.6 14" preserveAspectRatio="none"><rect x="2" y="0" width="10.6" height="3.6" rx="1" fill="#dccb80"/><rect x="0" y="4.4" width="14.6" height="1.6" fill="#dccb80"/><path d="M1.6 6.6 L13 6.6 L13 10 Q13 14 7.3 14 Q1.6 14 1.6 10Z" fill="#dccb80"/><rect x="3.6" y="8" width="2.4" height="1.6" fill="#fff"/><rect x="8.6" y="8" width="2.4" height="1.6" fill="#fff"/></svg>
<span style="position:absolute;top:301.10px;font-family:'Liberation Sans', sans-serif;font-size:17.6px;line-height:17.6px;font-weight:400;color:#444;white-space:nowrap;left:825.00px;transform:scaleX(0.978);transform-origin:left;">To Frankenstein</span>
<svg style="position:absolute;left:805.9px;top:337.9px;width:13.40px;height:17.10px;overflow:visible" viewBox="0 0 13.4 17.1" preserveAspectRatio="none"><path d="M2 2.4 L0.8 2.4 Q0.6 2.4 0.6 3 L0.6 16 Q0.6 16.5 1.2 16.5 L12.2 16.5 Q12.8 16.5 12.8 16 L12.8 3 Q12.8 2.4 12.2 2.4 L11 2.4" fill="none" stroke="#444" stroke-width="1.2"/><path d="M4 0.6 L9.4 0.6 L9.4 4 L4 4Z" fill="none" stroke="#444" stroke-width="1.2"/></svg>
<span style="position:absolute;top:338.20px;font-family:'Liberation Sans', sans-serif;font-size:17.6px;line-height:17.6px;font-weight:400;color:#444;white-space:nowrap;left:824.00px;transform:scaleX(0.989);transform-origin:left;">Copy to Clipboard</span>
</div></body></html>
